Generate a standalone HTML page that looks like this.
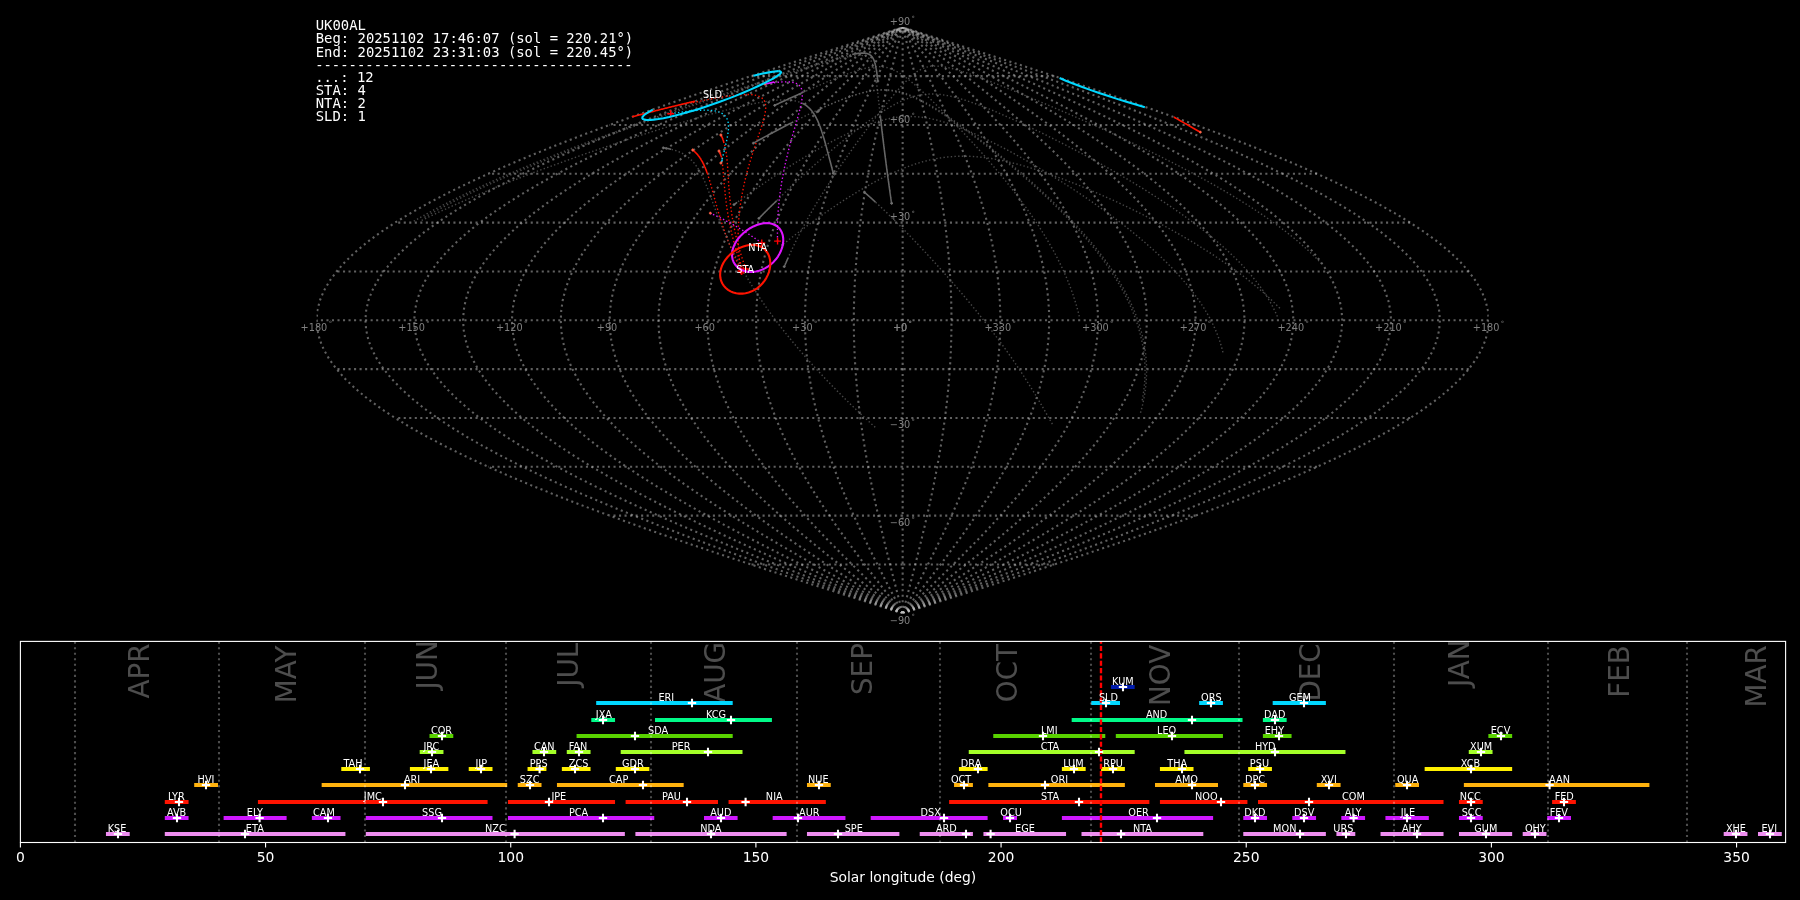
<!DOCTYPE html>
<html lang="en"><head><meta charset="utf-8"><title>UK00AL shower association</title>
<style>html,body{margin:0;padding:0;background:#000;overflow:hidden}svg{display:block;will-change:transform}text{font-family:"DejaVu Sans","Liberation Sans",sans-serif}.m{font-family:"DejaVu Sans Mono","Liberation Mono",monospace;font-size:13.889px;fill:#fff;white-space:pre}.g{fill:none;stroke:#c0c0c0;stroke-opacity:.5;stroke-width:2.083;stroke-dasharray:2.083 3.4375}.t{font-size:9.722px;fill:#808080;text-anchor:middle}.s{font-size:9.722px;fill:#fff;text-anchor:middle}.b{font-size:9.722px;fill:#fff;text-anchor:middle}.k{font-size:13.889px;fill:#fff;text-anchor:middle}.mo{font-size:27.778px;fill:#fff;fill-opacity:.3;text-anchor:end}.ml{fill:none;stroke:#fff;stroke-opacity:.3;stroke-width:2.083;stroke-dasharray:2.083 3.4375}.mt{fill:none;stroke-width:1.6}.md{fill:none;stroke-width:1.389;stroke-dasharray:1.389 2.292}.c{fill:none;stroke-width:2.083;stroke-linejoin:round}.bar{fill:none;stroke-width:4.167;stroke-linecap:square}.pk{fill:none;stroke:#fff;stroke-width:2.083}</style></head><body>
<svg width="1800" height="900" viewBox="0 0 1800 900">
<rect width="1800" height="900" fill="#000"/>
<defs><clipPath id="ca"><rect x="316.57" y="27.26" width="1172.16" height="586.08"/></clipPath>
<clipPath id="cb"><rect x="20.4" y="641.4" width="1765.2" height="201.1"/></clipPath></defs>
<g clip-path="url(#ca)">
<path class="g" d="M902.65 613.34 L902.65 603.57 L902.65 593.8 L902.65 584.04 L902.65 574.27 L902.65 564.5 L902.65 554.73 L902.65 544.96 L902.65 535.2 L902.65 525.43 L902.65 515.66 L902.65 505.89 L902.65 496.12 L902.65 486.36 L902.65 476.59 L902.65 466.82 L902.65 457.05 L902.65 447.28 L902.65 437.52 L902.65 427.75 L902.65 417.98 L902.65 408.21 L902.65 398.44 L902.65 388.68 L902.65 378.91 L902.65 369.14 L902.65 359.37 L902.65 349.6 L902.65 339.84 L902.65 330.07 L902.65 320.3 L902.65 310.53 L902.65 300.76 L902.65 291 L902.65 281.23 L902.65 271.46 L902.65 261.69 L902.65 251.92 L902.65 242.16 L902.65 232.39 L902.65 222.62 L902.65 212.85 L902.65 203.08 L902.65 193.32 L902.65 183.55 L902.65 173.78 L902.65 164.01 L902.65 154.24 L902.65 144.48 L902.65 134.71 L902.65 124.94 L902.65 115.17 L902.65 105.4 L902.65 95.64 L902.65 85.87 L902.65 76.1 L902.65 66.33 L902.65 56.56 L902.65 46.8 L902.65 37.03 L902.65 27.26"/>
<path class="g" d="M902.65 613.34 L900.09 603.57 L897.54 593.8 L895.01 584.04 L892.5 574.27 L890.01 564.5 L887.56 554.73 L885.15 544.96 L882.78 535.2 L880.48 525.43 L878.23 515.66 L876.05 505.89 L873.94 496.12 L871.91 486.36 L869.97 476.59 L868.11 466.82 L866.35 457.05 L864.69 447.28 L863.14 437.52 L861.69 427.75 L860.35 417.98 L859.13 408.21 L858.03 398.44 L857.05 388.68 L856.2 378.91 L855.47 369.14 L854.88 359.37 L854.41 349.6 L854.08 339.84 L853.88 330.07 L853.81 320.3 L853.88 310.53 L854.08 300.76 L854.41 291 L854.88 281.23 L855.47 271.46 L856.2 261.69 L857.05 251.92 L858.03 242.16 L859.13 232.39 L860.35 222.62 L861.69 212.85 L863.14 203.08 L864.69 193.32 L866.35 183.55 L868.11 173.78 L869.97 164.01 L871.91 154.24 L873.94 144.48 L876.05 134.71 L878.23 124.94 L880.48 115.17 L882.78 105.4 L885.15 95.64 L887.56 85.87 L890.01 76.1 L892.5 66.33 L895.01 56.56 L897.54 46.8 L900.09 37.03 L902.65 27.26"/>
<path class="g" d="M902.65 613.34 L897.54 603.57 L892.44 593.8 L887.37 584.04 L882.34 574.27 L877.37 564.5 L872.47 554.73 L867.64 544.96 L862.92 535.2 L858.3 525.43 L853.81 515.66 L849.45 505.89 L845.24 496.12 L841.18 486.36 L837.29 476.59 L833.58 466.82 L830.06 457.05 L826.74 447.28 L823.63 437.52 L820.73 427.75 L818.06 417.98 L815.62 408.21 L813.41 398.44 L811.46 388.68 L809.75 378.91 L808.3 369.14 L807.1 359.37 L806.17 349.6 L805.51 339.84 L805.1 330.07 L804.97 320.3 L805.1 310.53 L805.51 300.76 L806.17 291 L807.1 281.23 L808.3 271.46 L809.75 261.69 L811.46 251.92 L813.41 242.16 L815.62 232.39 L818.06 222.62 L820.73 212.85 L823.63 203.08 L826.74 193.32 L830.06 183.55 L833.58 173.78 L837.29 164.01 L841.18 154.24 L845.24 144.48 L849.45 134.71 L853.81 124.94 L858.3 115.17 L862.92 105.4 L867.64 95.64 L872.47 85.87 L877.37 76.1 L882.34 66.33 L887.37 56.56 L892.44 46.8 L897.54 37.03 L902.65 27.26"/>
<path class="g" d="M902.65 613.34 L894.98 603.57 L887.33 593.8 L879.73 584.04 L872.19 574.27 L864.73 564.5 L857.37 554.73 L850.14 544.96 L843.05 535.2 L836.13 525.43 L829.39 515.66 L822.85 505.89 L816.53 496.12 L810.44 486.36 L804.61 476.59 L799.04 466.82 L793.76 457.05 L788.78 447.28 L784.11 437.52 L779.77 427.75 L775.76 417.98 L772.1 408.21 L768.8 398.44 L765.86 388.68 L763.3 378.91 L761.12 369.14 L759.33 359.37 L757.93 349.6 L756.93 339.84 L756.33 330.07 L756.13 320.3 L756.33 310.53 L756.93 300.76 L757.93 291 L759.33 281.23 L761.12 271.46 L763.3 261.69 L765.86 251.92 L768.8 242.16 L772.1 232.39 L775.76 222.62 L779.77 212.85 L784.11 203.08 L788.78 193.32 L793.76 183.55 L799.04 173.78 L804.61 164.01 L810.44 154.24 L816.53 144.48 L822.85 134.71 L829.39 124.94 L836.13 115.17 L843.05 105.4 L850.14 95.64 L857.37 85.87 L864.73 76.1 L872.19 66.33 L879.73 56.56 L887.33 46.8 L894.98 37.03 L902.65 27.26"/>
<path class="g" d="M902.65 613.34 L892.43 603.57 L882.23 593.8 L872.09 584.04 L862.03 574.27 L852.09 564.5 L842.28 554.73 L832.64 544.96 L823.19 535.2 L813.96 525.43 L804.97 515.66 L796.25 505.89 L787.82 496.12 L779.71 486.36 L771.93 476.59 L764.51 466.82 L757.47 457.05 L750.83 447.28 L744.6 437.52 L738.81 427.75 L733.46 417.98 L728.58 408.21 L724.18 398.44 L720.27 388.68 L716.85 378.91 L713.95 369.14 L711.56 359.37 L709.7 349.6 L708.36 339.84 L707.56 330.07 L707.29 320.3 L707.56 310.53 L708.36 300.76 L709.7 291 L711.56 281.23 L713.95 271.46 L716.85 261.69 L720.27 251.92 L724.18 242.16 L728.58 232.39 L733.46 222.62 L738.81 212.85 L744.6 203.08 L750.83 193.32 L757.47 183.55 L764.51 173.78 L771.93 164.01 L779.71 154.24 L787.82 144.48 L796.25 134.71 L804.97 124.94 L813.96 115.17 L823.19 105.4 L832.64 95.64 L842.28 85.87 L852.09 76.1 L862.03 66.33 L872.09 56.56 L882.23 46.8 L892.43 37.03 L902.65 27.26"/>
<path class="g" d="M902.65 613.34 L889.87 603.57 L877.12 593.8 L864.45 584.04 L851.88 574.27 L839.45 564.5 L827.19 554.73 L815.14 544.96 L803.32 535.2 L791.79 525.43 L780.55 515.66 L769.65 505.89 L759.11 496.12 L748.97 486.36 L739.25 476.59 L729.97 466.82 L721.17 457.05 L712.87 447.28 L705.09 437.52 L697.85 427.75 L691.17 417.98 L685.07 408.21 L679.56 398.44 L674.67 388.68 L670.4 378.91 L666.77 369.14 L663.79 359.37 L661.46 349.6 L659.79 339.84 L658.78 330.07 L658.45 320.3 L658.78 310.53 L659.79 300.76 L661.46 291 L663.79 281.23 L666.77 271.46 L670.4 261.69 L674.67 251.92 L679.56 242.16 L685.07 232.39 L691.17 222.62 L697.85 212.85 L705.09 203.08 L712.87 193.32 L721.17 183.55 L729.97 173.78 L739.25 164.01 L748.97 154.24 L759.11 144.48 L769.65 134.71 L780.55 124.94 L791.79 115.17 L803.32 105.4 L815.14 95.64 L827.19 85.87 L839.45 76.1 L851.88 66.33 L864.45 56.56 L877.12 46.8 L889.87 37.03 L902.65 27.26"/>
<path class="g" d="M902.65 613.34 L887.31 603.57 L872.02 593.8 L856.81 584.04 L841.72 574.27 L826.81 564.5 L812.1 554.73 L797.63 544.96 L783.46 535.2 L769.61 525.43 L756.13 515.66 L743.05 505.89 L730.41 496.12 L718.23 486.36 L706.57 476.59 L695.44 466.82 L684.88 457.05 L674.92 447.28 L665.58 437.52 L656.89 427.75 L648.87 417.98 L641.55 408.21 L634.94 398.44 L629.07 388.68 L623.95 378.91 L619.6 369.14 L616.01 359.37 L613.22 349.6 L611.22 339.84 L610.01 330.07 L609.61 320.3 L610.01 310.53 L611.22 300.76 L613.22 291 L616.01 281.23 L619.6 271.46 L623.95 261.69 L629.07 251.92 L634.94 242.16 L641.55 232.39 L648.87 222.62 L656.89 212.85 L665.58 203.08 L674.92 193.32 L684.88 183.55 L695.44 173.78 L706.57 164.01 L718.23 154.24 L730.41 144.48 L743.05 134.71 L756.13 124.94 L769.61 115.17 L783.46 105.4 L797.63 95.64 L812.1 85.87 L826.81 76.1 L841.72 66.33 L856.81 56.56 L872.02 46.8 L887.31 37.03 L902.65 27.26"/>
<path class="g" d="M902.65 613.34 L884.76 603.57 L866.91 593.8 L849.17 584.04 L831.57 574.27 L814.16 564.5 L797 554.73 L780.13 544.96 L763.59 535.2 L747.44 525.43 L731.71 515.66 L716.45 505.89 L701.7 496.12 L687.5 486.36 L673.89 476.59 L660.9 466.82 L648.58 457.05 L636.96 447.28 L626.06 437.52 L615.93 427.75 L606.57 417.98 L598.03 408.21 L590.33 398.44 L583.48 388.68 L577.5 378.91 L572.42 369.14 L568.24 359.37 L564.98 349.6 L562.64 339.84 L561.24 330.07 L560.77 320.3 L561.24 310.53 L562.64 300.76 L564.98 291 L568.24 281.23 L572.42 271.46 L577.5 261.69 L583.48 251.92 L590.33 242.16 L598.03 232.39 L606.57 222.62 L615.93 212.85 L626.06 203.08 L636.96 193.32 L648.58 183.55 L660.9 173.78 L673.89 164.01 L687.5 154.24 L701.7 144.48 L716.45 134.71 L731.71 124.94 L747.44 115.17 L763.59 105.4 L780.13 95.64 L797 85.87 L814.16 76.1 L831.57 66.33 L849.17 56.56 L866.91 46.8 L884.76 37.03 L902.65 27.26"/>
<path class="g" d="M902.65 613.34 L882.2 603.57 L861.81 593.8 L841.53 584.04 L821.41 574.27 L801.52 564.5 L781.91 554.73 L762.63 544.96 L743.73 535.2 L725.27 525.43 L707.29 515.66 L689.85 505.89 L672.99 496.12 L656.76 486.36 L641.21 476.59 L626.37 466.82 L612.29 457.05 L599 447.28 L586.55 437.52 L574.96 427.75 L564.28 417.98 L554.52 408.21 L545.71 398.44 L537.88 388.68 L531.05 378.91 L525.24 369.14 L520.47 359.37 L516.74 349.6 L514.07 339.84 L512.47 330.07 L511.93 320.3 L512.47 310.53 L514.07 300.76 L516.74 291 L520.47 281.23 L525.24 271.46 L531.05 261.69 L537.88 251.92 L545.71 242.16 L554.52 232.39 L564.28 222.62 L574.96 212.85 L586.55 203.08 L599 193.32 L612.29 183.55 L626.37 173.78 L641.21 164.01 L656.76 154.24 L672.99 144.48 L689.85 134.71 L707.29 124.94 L725.27 115.17 L743.73 105.4 L762.63 95.64 L781.91 85.87 L801.52 76.1 L821.41 66.33 L841.53 56.56 L861.81 46.8 L882.2 37.03 L902.65 27.26"/>
<path class="g" d="M902.65 613.34 L879.65 603.57 L856.7 593.8 L833.89 584.04 L811.26 574.27 L788.88 564.5 L766.82 554.73 L745.13 544.96 L723.86 535.2 L703.09 525.43 L682.87 515.66 L663.25 505.89 L644.28 496.12 L626.03 486.36 L608.53 476.59 L591.83 466.82 L575.99 457.05 L561.05 447.28 L547.04 437.52 L534 427.75 L521.98 417.98 L511 408.21 L501.09 398.44 L492.29 388.68 L484.6 378.91 L478.07 369.14 L472.7 359.37 L468.5 349.6 L465.5 339.84 L463.69 330.07 L463.09 320.3 L463.69 310.53 L465.5 300.76 L468.5 291 L472.7 281.23 L478.07 271.46 L484.6 261.69 L492.29 251.92 L501.09 242.16 L511 232.39 L521.98 222.62 L534 212.85 L547.04 203.08 L561.05 193.32 L575.99 183.55 L591.83 173.78 L608.53 164.01 L626.03 154.24 L644.28 144.48 L663.25 134.71 L682.87 124.94 L703.09 115.17 L723.86 105.4 L745.13 95.64 L766.82 85.87 L788.88 76.1 L811.26 66.33 L833.89 56.56 L856.7 46.8 L879.65 37.03 L902.65 27.26"/>
<path class="g" d="M902.65 613.34 L877.09 603.57 L851.6 593.8 L826.25 584.04 L801.11 574.27 L776.24 564.5 L751.73 554.73 L727.62 544.96 L704 535.2 L680.92 525.43 L658.45 515.66 L636.65 505.89 L615.58 496.12 L595.29 486.36 L575.85 476.59 L557.3 466.82 L539.7 457.05 L523.09 447.28 L507.53 437.52 L493.04 427.75 L479.68 417.98 L467.48 408.21 L456.47 398.44 L446.69 388.68 L438.15 378.91 L430.89 369.14 L424.92 359.37 L420.26 349.6 L416.93 339.84 L414.92 330.07 L414.25 320.3 L414.92 310.53 L416.93 300.76 L420.26 291 L424.92 281.23 L430.89 271.46 L438.15 261.69 L446.69 251.92 L456.47 242.16 L467.48 232.39 L479.68 222.62 L493.04 212.85 L507.53 203.08 L523.09 193.32 L539.7 183.55 L557.3 173.78 L575.85 164.01 L595.29 154.24 L615.58 144.48 L636.65 134.71 L658.45 124.94 L680.92 115.17 L704 105.4 L727.62 95.64 L751.73 85.87 L776.24 76.1 L801.11 66.33 L826.25 56.56 L851.6 46.8 L877.09 37.03 L902.65 27.26"/>
<path class="g" d="M902.65 613.34 L874.53 603.57 L846.49 593.8 L818.61 584.04 L790.95 574.27 L763.6 564.5 L736.63 554.73 L710.12 544.96 L684.13 535.2 L658.75 525.43 L634.03 515.66 L610.05 505.89 L586.87 496.12 L564.55 486.36 L543.17 476.59 L522.76 466.82 L503.4 457.05 L485.14 447.28 L468.01 437.52 L452.08 427.75 L437.39 417.98 L423.97 408.21 L411.86 398.44 L401.09 388.68 L391.7 378.91 L383.72 369.14 L377.15 359.37 L372.02 349.6 L368.35 339.84 L366.15 330.07 L365.41 320.3 L366.15 310.53 L368.35 300.76 L372.02 291 L377.15 281.23 L383.72 271.46 L391.7 261.69 L401.09 251.92 L411.86 242.16 L423.97 232.39 L437.39 222.62 L452.08 212.85 L468.01 203.08 L485.14 193.32 L503.4 183.55 L522.76 173.78 L543.17 164.01 L564.55 154.24 L586.87 144.48 L610.05 134.71 L634.03 124.94 L658.75 115.17 L684.13 105.4 L710.12 95.64 L736.63 85.87 L763.6 76.1 L790.95 66.33 L818.61 56.56 L846.49 46.8 L874.53 37.03 L902.65 27.26"/>
<path class="g" d="M902.65 613.34 L871.98 603.57 L841.39 593.8 L810.97 584.04 L780.8 574.27 L750.96 564.5 L721.54 554.73 L692.62 544.96 L664.27 535.2 L636.58 525.43 L609.61 515.66 L583.45 505.89 L558.16 496.12 L533.82 486.36 L510.49 476.59 L488.23 466.82 L467.11 457.05 L447.18 447.28 L428.5 437.52 L411.12 427.75 L395.09 417.98 L380.45 408.21 L367.24 398.44 L355.5 388.68 L345.25 378.91 L336.54 369.14 L329.38 359.37 L323.79 349.6 L319.78 339.84 L317.37 330.07 L316.57 320.3 L317.37 310.53 L319.78 300.76 L323.79 291 L329.38 281.23 L336.54 271.46 L345.25 261.69 L355.5 251.92 L367.24 242.16 L380.45 232.39 L395.09 222.62 L411.12 212.85 L428.5 203.08 L447.18 193.32 L467.11 183.55 L488.23 173.78 L510.49 164.01 L533.82 154.24 L558.16 144.48 L583.45 134.71 L609.61 124.94 L636.58 115.17 L664.27 105.4 L692.62 95.64 L721.54 85.87 L750.96 76.1 L780.8 66.33 L810.97 56.56 L841.39 46.8 L871.98 37.03 L902.65 27.26"/>
<path class="g" d="M902.65 613.34 L933.32 603.57 L963.91 593.8 L994.33 584.04 L1024.5 574.27 L1054.34 564.5 L1083.76 554.73 L1112.68 544.96 L1141.03 535.2 L1168.72 525.43 L1195.69 515.66 L1221.85 505.89 L1247.14 496.12 L1271.48 486.36 L1294.81 476.59 L1317.07 466.82 L1338.19 457.05 L1358.12 447.28 L1376.8 437.52 L1394.18 427.75 L1410.21 417.98 L1424.85 408.21 L1438.06 398.44 L1449.8 388.68 L1460.04 378.91 L1468.76 369.14 L1475.92 359.37 L1481.51 349.6 L1485.52 339.84 L1487.93 330.07 L1488.73 320.3 L1487.93 310.53 L1485.52 300.76 L1481.51 291 L1475.92 281.23 L1468.76 271.46 L1460.04 261.69 L1449.8 251.92 L1438.06 242.16 L1424.85 232.39 L1410.21 222.62 L1394.18 212.85 L1376.8 203.08 L1358.12 193.32 L1338.19 183.55 L1317.07 173.78 L1294.81 164.01 L1271.48 154.24 L1247.14 144.48 L1221.85 134.71 L1195.69 124.94 L1168.72 115.17 L1141.03 105.4 L1112.68 95.64 L1083.76 85.87 L1054.34 76.1 L1024.5 66.33 L994.33 56.56 L963.91 46.8 L933.32 37.03 L902.65 27.26"/>
<path class="g" d="M902.65 613.34 L930.77 603.57 L958.81 593.8 L986.69 584.04 L1014.35 574.27 L1041.7 564.5 L1068.67 554.73 L1095.18 544.96 L1121.17 535.2 L1146.55 525.43 L1171.27 515.66 L1195.25 505.89 L1218.43 496.12 L1240.75 486.36 L1262.13 476.59 L1282.54 466.82 L1301.9 457.05 L1320.16 447.28 L1337.29 437.52 L1353.22 427.75 L1367.91 417.98 L1381.33 408.21 L1393.44 398.44 L1404.21 388.68 L1413.6 378.91 L1421.58 369.14 L1428.15 359.37 L1433.28 349.6 L1436.95 339.84 L1439.15 330.07 L1439.89 320.3 L1439.15 310.53 L1436.95 300.76 L1433.28 291 L1428.15 281.23 L1421.58 271.46 L1413.6 261.69 L1404.21 251.92 L1393.44 242.16 L1381.33 232.39 L1367.91 222.62 L1353.22 212.85 L1337.29 203.08 L1320.16 193.32 L1301.9 183.55 L1282.54 173.78 L1262.13 164.01 L1240.75 154.24 L1218.43 144.48 L1195.25 134.71 L1171.27 124.94 L1146.55 115.17 L1121.17 105.4 L1095.18 95.64 L1068.67 85.87 L1041.7 76.1 L1014.35 66.33 L986.69 56.56 L958.81 46.8 L930.77 37.03 L902.65 27.26"/>
<path class="g" d="M902.65 613.34 L928.21 603.57 L953.7 593.8 L979.05 584.04 L1004.19 574.27 L1029.06 564.5 L1053.57 554.73 L1077.68 544.96 L1101.3 535.2 L1124.38 525.43 L1146.85 515.66 L1168.65 505.89 L1189.72 496.12 L1210.01 486.36 L1229.45 476.59 L1248 466.82 L1265.6 457.05 L1282.21 447.28 L1297.77 437.52 L1312.26 427.75 L1325.62 417.98 L1337.82 408.21 L1348.83 398.44 L1358.61 388.68 L1367.15 378.91 L1374.41 369.14 L1380.38 359.37 L1385.04 349.6 L1388.37 339.84 L1390.38 330.07 L1391.05 320.3 L1390.38 310.53 L1388.37 300.76 L1385.04 291 L1380.38 281.23 L1374.41 271.46 L1367.15 261.69 L1358.61 251.92 L1348.83 242.16 L1337.82 232.39 L1325.62 222.62 L1312.26 212.85 L1297.77 203.08 L1282.21 193.32 L1265.6 183.55 L1248 173.78 L1229.45 164.01 L1210.01 154.24 L1189.72 144.48 L1168.65 134.71 L1146.85 124.94 L1124.38 115.17 L1101.3 105.4 L1077.68 95.64 L1053.57 85.87 L1029.06 76.1 L1004.19 66.33 L979.05 56.56 L953.7 46.8 L928.21 37.03 L902.65 27.26"/>
<path class="g" d="M902.65 613.34 L925.65 603.57 L948.6 593.8 L971.41 584.04 L994.04 574.27 L1016.42 564.5 L1038.48 554.73 L1060.17 544.96 L1081.44 535.2 L1102.21 525.43 L1122.43 515.66 L1142.05 505.89 L1161.02 496.12 L1179.27 486.36 L1196.77 476.59 L1213.47 466.82 L1229.31 457.05 L1244.25 447.28 L1258.26 437.52 L1271.3 427.75 L1283.32 417.98 L1294.3 408.21 L1304.21 398.44 L1313.01 388.68 L1320.7 378.91 L1327.23 369.14 L1332.6 359.37 L1336.8 349.6 L1339.8 339.84 L1341.61 330.07 L1342.21 320.3 L1341.61 310.53 L1339.8 300.76 L1336.8 291 L1332.6 281.23 L1327.23 271.46 L1320.7 261.69 L1313.01 251.92 L1304.21 242.16 L1294.3 232.39 L1283.32 222.62 L1271.3 212.85 L1258.26 203.08 L1244.25 193.32 L1229.31 183.55 L1213.47 173.78 L1196.77 164.01 L1179.27 154.24 L1161.02 144.48 L1142.05 134.71 L1122.43 124.94 L1102.21 115.17 L1081.44 105.4 L1060.17 95.64 L1038.48 85.87 L1016.42 76.1 L994.04 66.33 L971.41 56.56 L948.6 46.8 L925.65 37.03 L902.65 27.26"/>
<path class="g" d="M902.65 613.34 L923.1 603.57 L943.49 593.8 L963.77 584.04 L983.89 574.27 L1003.78 564.5 L1023.39 554.73 L1042.67 544.96 L1061.57 535.2 L1080.03 525.43 L1098.01 515.66 L1115.45 505.89 L1132.31 496.12 L1148.54 486.36 L1164.09 476.59 L1178.93 466.82 L1193.01 457.05 L1206.3 447.28 L1218.75 437.52 L1230.34 427.75 L1241.02 417.98 L1250.78 408.21 L1259.59 398.44 L1267.42 388.68 L1274.25 378.91 L1280.06 369.14 L1284.83 359.37 L1288.56 349.6 L1291.23 339.84 L1292.83 330.07 L1293.37 320.3 L1292.83 310.53 L1291.23 300.76 L1288.56 291 L1284.83 281.23 L1280.06 271.46 L1274.25 261.69 L1267.42 251.92 L1259.59 242.16 L1250.78 232.39 L1241.02 222.62 L1230.34 212.85 L1218.75 203.08 L1206.3 193.32 L1193.01 183.55 L1178.93 173.78 L1164.09 164.01 L1148.54 154.24 L1132.31 144.48 L1115.45 134.71 L1098.01 124.94 L1080.03 115.17 L1061.57 105.4 L1042.67 95.64 L1023.39 85.87 L1003.78 76.1 L983.89 66.33 L963.77 56.56 L943.49 46.8 L923.1 37.03 L902.65 27.26"/>
<path class="g" d="M902.65 613.34 L920.54 603.57 L938.39 593.8 L956.13 584.04 L973.73 574.27 L991.14 564.5 L1008.3 554.73 L1025.17 544.96 L1041.71 535.2 L1057.86 525.43 L1073.59 515.66 L1088.85 505.89 L1103.6 496.12 L1117.8 486.36 L1131.41 476.59 L1144.4 466.82 L1156.72 457.05 L1168.34 447.28 L1179.24 437.52 L1189.37 427.75 L1198.73 417.98 L1207.27 408.21 L1214.97 398.44 L1221.82 388.68 L1227.8 378.91 L1232.88 369.14 L1237.06 359.37 L1240.32 349.6 L1242.66 339.84 L1244.06 330.07 L1244.53 320.3 L1244.06 310.53 L1242.66 300.76 L1240.32 291 L1237.06 281.23 L1232.88 271.46 L1227.8 261.69 L1221.82 251.92 L1214.97 242.16 L1207.27 232.39 L1198.73 222.62 L1189.37 212.85 L1179.24 203.08 L1168.34 193.32 L1156.72 183.55 L1144.4 173.78 L1131.41 164.01 L1117.8 154.24 L1103.6 144.48 L1088.85 134.71 L1073.59 124.94 L1057.86 115.17 L1041.71 105.4 L1025.17 95.64 L1008.3 85.87 L991.14 76.1 L973.73 66.33 L956.13 56.56 L938.39 46.8 L920.54 37.03 L902.65 27.26"/>
<path class="g" d="M902.65 613.34 L917.99 603.57 L933.28 593.8 L948.49 584.04 L963.58 574.27 L978.49 564.5 L993.2 554.73 L1007.67 544.96 L1021.84 535.2 L1035.69 525.43 L1049.17 515.66 L1062.25 505.89 L1074.89 496.12 L1087.07 486.36 L1098.73 476.59 L1109.86 466.82 L1120.42 457.05 L1130.38 447.28 L1139.72 437.52 L1148.41 427.75 L1156.43 417.98 L1163.75 408.21 L1170.36 398.44 L1176.23 388.68 L1181.35 378.91 L1185.7 369.14 L1189.29 359.37 L1192.08 349.6 L1194.08 339.84 L1195.29 330.07 L1195.69 320.3 L1195.29 310.53 L1194.08 300.76 L1192.08 291 L1189.29 281.23 L1185.7 271.46 L1181.35 261.69 L1176.23 251.92 L1170.36 242.16 L1163.75 232.39 L1156.43 222.62 L1148.41 212.85 L1139.72 203.08 L1130.38 193.32 L1120.42 183.55 L1109.86 173.78 L1098.73 164.01 L1087.07 154.24 L1074.89 144.48 L1062.25 134.71 L1049.17 124.94 L1035.69 115.17 L1021.84 105.4 L1007.67 95.64 L993.2 85.87 L978.49 76.1 L963.58 66.33 L948.49 56.56 L933.28 46.8 L917.99 37.03 L902.65 27.26"/>
<path class="g" d="M902.65 613.34 L915.43 603.57 L928.18 593.8 L940.85 584.04 L953.42 574.27 L965.85 564.5 L978.11 554.73 L990.16 544.96 L1001.98 535.2 L1013.51 525.43 L1024.75 515.66 L1035.65 505.89 L1046.19 496.12 L1056.33 486.36 L1066.05 476.59 L1075.33 466.82 L1084.13 457.05 L1092.43 447.28 L1100.21 437.52 L1107.45 427.75 L1114.13 417.98 L1120.23 408.21 L1125.74 398.44 L1130.63 388.68 L1134.9 378.91 L1138.53 369.14 L1141.51 359.37 L1143.84 349.6 L1145.51 339.84 L1146.52 330.07 L1146.85 320.3 L1146.52 310.53 L1145.51 300.76 L1143.84 291 L1141.51 281.23 L1138.53 271.46 L1134.9 261.69 L1130.63 251.92 L1125.74 242.16 L1120.23 232.39 L1114.13 222.62 L1107.45 212.85 L1100.21 203.08 L1092.43 193.32 L1084.13 183.55 L1075.33 173.78 L1066.05 164.01 L1056.33 154.24 L1046.19 144.48 L1035.65 134.71 L1024.75 124.94 L1013.51 115.17 L1001.98 105.4 L990.16 95.64 L978.11 85.87 L965.85 76.1 L953.42 66.33 L940.85 56.56 L928.18 46.8 L915.43 37.03 L902.65 27.26"/>
<path class="g" d="M902.65 613.34 L912.87 603.57 L923.07 593.8 L933.21 584.04 L943.27 574.27 L953.21 564.5 L963.02 554.73 L972.66 544.96 L982.11 535.2 L991.34 525.43 L1000.33 515.66 L1009.05 505.89 L1017.48 496.12 L1025.59 486.36 L1033.37 476.59 L1040.79 466.82 L1047.83 457.05 L1054.47 447.28 L1060.7 437.52 L1066.49 427.75 L1071.84 417.98 L1076.72 408.21 L1081.12 398.44 L1085.03 388.68 L1088.45 378.91 L1091.35 369.14 L1093.74 359.37 L1095.6 349.6 L1096.94 339.84 L1097.74 330.07 L1098.01 320.3 L1097.74 310.53 L1096.94 300.76 L1095.6 291 L1093.74 281.23 L1091.35 271.46 L1088.45 261.69 L1085.03 251.92 L1081.12 242.16 L1076.72 232.39 L1071.84 222.62 L1066.49 212.85 L1060.7 203.08 L1054.47 193.32 L1047.83 183.55 L1040.79 173.78 L1033.37 164.01 L1025.59 154.24 L1017.48 144.48 L1009.05 134.71 L1000.33 124.94 L991.34 115.17 L982.11 105.4 L972.66 95.64 L963.02 85.87 L953.21 76.1 L943.27 66.33 L933.21 56.56 L923.07 46.8 L912.87 37.03 L902.65 27.26"/>
<path class="g" d="M902.65 613.34 L910.32 603.57 L917.97 593.8 L925.57 584.04 L933.11 574.27 L940.57 564.5 L947.93 554.73 L955.16 544.96 L962.25 535.2 L969.17 525.43 L975.91 515.66 L982.45 505.89 L988.77 496.12 L994.86 486.36 L1000.69 476.59 L1006.26 466.82 L1011.54 457.05 L1016.52 447.28 L1021.19 437.52 L1025.53 427.75 L1029.54 417.98 L1033.2 408.21 L1036.5 398.44 L1039.44 388.68 L1042 378.91 L1044.18 369.14 L1045.97 359.37 L1047.37 349.6 L1048.37 339.84 L1048.97 330.07 L1049.17 320.3 L1048.97 310.53 L1048.37 300.76 L1047.37 291 L1045.97 281.23 L1044.18 271.46 L1042 261.69 L1039.44 251.92 L1036.5 242.16 L1033.2 232.39 L1029.54 222.62 L1025.53 212.85 L1021.19 203.08 L1016.52 193.32 L1011.54 183.55 L1006.26 173.78 L1000.69 164.01 L994.86 154.24 L988.77 144.48 L982.45 134.71 L975.91 124.94 L969.17 115.17 L962.25 105.4 L955.16 95.64 L947.93 85.87 L940.57 76.1 L933.11 66.33 L925.57 56.56 L917.97 46.8 L910.32 37.03 L902.65 27.26"/>
<path class="g" d="M902.65 613.34 L907.76 603.57 L912.86 593.8 L917.93 584.04 L922.96 574.27 L927.93 564.5 L932.83 554.73 L937.66 544.96 L942.38 535.2 L947 525.43 L951.49 515.66 L955.85 505.89 L960.06 496.12 L964.12 486.36 L968.01 476.59 L971.72 466.82 L975.24 457.05 L978.56 447.28 L981.67 437.52 L984.57 427.75 L987.24 417.98 L989.68 408.21 L991.89 398.44 L993.84 388.68 L995.55 378.91 L997 369.14 L998.2 359.37 L999.13 349.6 L999.79 339.84 L1000.2 330.07 L1000.33 320.3 L1000.2 310.53 L999.79 300.76 L999.13 291 L998.2 281.23 L997 271.46 L995.55 261.69 L993.84 251.92 L991.89 242.16 L989.68 232.39 L987.24 222.62 L984.57 212.85 L981.67 203.08 L978.56 193.32 L975.24 183.55 L971.72 173.78 L968.01 164.01 L964.12 154.24 L960.06 144.48 L955.85 134.71 L951.49 124.94 L947 115.17 L942.38 105.4 L937.66 95.64 L932.83 85.87 L927.93 76.1 L922.96 66.33 L917.93 56.56 L912.86 46.8 L907.76 37.03 L902.65 27.26"/>
<path class="g" d="M902.65 613.34 L905.21 603.57 L907.76 593.8 L910.29 584.04 L912.8 574.27 L915.29 564.5 L917.74 554.73 L920.15 544.96 L922.52 535.2 L924.82 525.43 L927.07 515.66 L929.25 505.89 L931.36 496.12 L933.39 486.36 L935.33 476.59 L937.19 466.82 L938.95 457.05 L940.61 447.28 L942.16 437.52 L943.61 427.75 L944.95 417.98 L946.17 408.21 L947.27 398.44 L948.25 388.68 L949.1 378.91 L949.83 369.14 L950.42 359.37 L950.89 349.6 L951.22 339.84 L951.42 330.07 L951.49 320.3 L951.42 310.53 L951.22 300.76 L950.89 291 L950.42 281.23 L949.83 271.46 L949.1 261.69 L948.25 251.92 L947.27 242.16 L946.17 232.39 L944.95 222.62 L943.61 212.85 L942.16 203.08 L940.61 193.32 L938.95 183.55 L937.19 173.78 L935.33 164.01 L933.39 154.24 L931.36 144.48 L929.25 134.71 L927.07 124.94 L924.82 115.17 L922.52 105.4 L920.15 95.64 L917.74 85.87 L915.29 76.1 L912.8 66.33 L910.29 56.56 L907.76 46.8 L905.21 37.03 L902.65 27.26"/>
<path class="g" d="M902.65 613.34 L902.65 613.34 L902.65 613.34 L902.65 613.34 L902.65 613.34 L902.65 613.34 L902.65 613.34 L902.65 613.34 L902.65 613.34 L902.65 613.34 L902.65 613.34 L902.65 613.34 L902.65 613.34"/>
<path class="g" d="M902.65 613.34 L902.65 613.34 L902.65 613.34 L902.65 613.34 L902.65 613.34 L902.65 613.34 L902.65 613.34 L902.65 613.34 L902.65 613.34 L902.65 613.34 L902.65 613.34 L902.65 613.34 L902.65 613.34"/>
<path class="g" d="M902.65 564.5 L890.01 564.5 L877.37 564.5 L864.73 564.5 L852.09 564.5 L839.45 564.5 L826.81 564.5 L814.16 564.5 L801.52 564.5 L788.88 564.5 L776.24 564.5 L763.6 564.5 L750.96 564.5"/>
<path class="g" d="M1054.34 564.5 L1041.7 564.5 L1029.06 564.5 L1016.42 564.5 L1003.78 564.5 L991.14 564.5 L978.49 564.5 L965.85 564.5 L953.21 564.5 L940.57 564.5 L927.93 564.5 L915.29 564.5 L902.65 564.5"/>
<path class="g" d="M902.65 515.66 L878.23 515.66 L853.81 515.66 L829.39 515.66 L804.97 515.66 L780.55 515.66 L756.13 515.66 L731.71 515.66 L707.29 515.66 L682.87 515.66 L658.45 515.66 L634.03 515.66 L609.61 515.66"/>
<path class="g" d="M1195.69 515.66 L1171.27 515.66 L1146.85 515.66 L1122.43 515.66 L1098.01 515.66 L1073.59 515.66 L1049.17 515.66 L1024.75 515.66 L1000.33 515.66 L975.91 515.66 L951.49 515.66 L927.07 515.66 L902.65 515.66"/>
<path class="g" d="M902.65 466.82 L868.11 466.82 L833.58 466.82 L799.04 466.82 L764.51 466.82 L729.97 466.82 L695.44 466.82 L660.9 466.82 L626.37 466.82 L591.83 466.82 L557.3 466.82 L522.76 466.82 L488.23 466.82"/>
<path class="g" d="M1317.07 466.82 L1282.54 466.82 L1248 466.82 L1213.47 466.82 L1178.93 466.82 L1144.4 466.82 L1109.86 466.82 L1075.33 466.82 L1040.79 466.82 L1006.26 466.82 L971.72 466.82 L937.19 466.82 L902.65 466.82"/>
<path class="g" d="M902.65 417.98 L860.35 417.98 L818.06 417.98 L775.76 417.98 L733.46 417.98 L691.17 417.98 L648.87 417.98 L606.57 417.98 L564.28 417.98 L521.98 417.98 L479.68 417.98 L437.39 417.98 L395.09 417.98"/>
<path class="g" d="M1410.21 417.98 L1367.91 417.98 L1325.62 417.98 L1283.32 417.98 L1241.02 417.98 L1198.73 417.98 L1156.43 417.98 L1114.13 417.98 L1071.84 417.98 L1029.54 417.98 L987.24 417.98 L944.95 417.98 L902.65 417.98"/>
<path class="g" d="M902.65 369.14 L855.47 369.14 L808.3 369.14 L761.12 369.14 L713.95 369.14 L666.77 369.14 L619.6 369.14 L572.42 369.14 L525.24 369.14 L478.07 369.14 L430.89 369.14 L383.72 369.14 L336.54 369.14"/>
<path class="g" d="M1468.76 369.14 L1421.58 369.14 L1374.41 369.14 L1327.23 369.14 L1280.06 369.14 L1232.88 369.14 L1185.7 369.14 L1138.53 369.14 L1091.35 369.14 L1044.18 369.14 L997 369.14 L949.83 369.14 L902.65 369.14"/>
<path class="g" d="M902.65 320.3 L853.81 320.3 L804.97 320.3 L756.13 320.3 L707.29 320.3 L658.45 320.3 L609.61 320.3 L560.77 320.3 L511.93 320.3 L463.09 320.3 L414.25 320.3 L365.41 320.3 L316.57 320.3"/>
<path class="g" d="M1488.73 320.3 L1439.89 320.3 L1391.05 320.3 L1342.21 320.3 L1293.37 320.3 L1244.53 320.3 L1195.69 320.3 L1146.85 320.3 L1098.01 320.3 L1049.17 320.3 L1000.33 320.3 L951.49 320.3 L902.65 320.3"/>
<path class="g" d="M902.65 271.46 L855.47 271.46 L808.3 271.46 L761.12 271.46 L713.95 271.46 L666.77 271.46 L619.6 271.46 L572.42 271.46 L525.24 271.46 L478.07 271.46 L430.89 271.46 L383.72 271.46 L336.54 271.46"/>
<path class="g" d="M1468.76 271.46 L1421.58 271.46 L1374.41 271.46 L1327.23 271.46 L1280.06 271.46 L1232.88 271.46 L1185.7 271.46 L1138.53 271.46 L1091.35 271.46 L1044.18 271.46 L997 271.46 L949.83 271.46 L902.65 271.46"/>
<path class="g" d="M902.65 222.62 L860.35 222.62 L818.06 222.62 L775.76 222.62 L733.46 222.62 L691.17 222.62 L648.87 222.62 L606.57 222.62 L564.28 222.62 L521.98 222.62 L479.68 222.62 L437.39 222.62 L395.09 222.62"/>
<path class="g" d="M1410.21 222.62 L1367.91 222.62 L1325.62 222.62 L1283.32 222.62 L1241.02 222.62 L1198.73 222.62 L1156.43 222.62 L1114.13 222.62 L1071.84 222.62 L1029.54 222.62 L987.24 222.62 L944.95 222.62 L902.65 222.62"/>
<path class="g" d="M902.65 173.78 L868.11 173.78 L833.58 173.78 L799.04 173.78 L764.51 173.78 L729.97 173.78 L695.44 173.78 L660.9 173.78 L626.37 173.78 L591.83 173.78 L557.3 173.78 L522.76 173.78 L488.23 173.78"/>
<path class="g" d="M1317.07 173.78 L1282.54 173.78 L1248 173.78 L1213.47 173.78 L1178.93 173.78 L1144.4 173.78 L1109.86 173.78 L1075.33 173.78 L1040.79 173.78 L1006.26 173.78 L971.72 173.78 L937.19 173.78 L902.65 173.78"/>
<path class="g" d="M902.65 124.94 L878.23 124.94 L853.81 124.94 L829.39 124.94 L804.97 124.94 L780.55 124.94 L756.13 124.94 L731.71 124.94 L707.29 124.94 L682.87 124.94 L658.45 124.94 L634.03 124.94 L609.61 124.94"/>
<path class="g" d="M1195.69 124.94 L1171.27 124.94 L1146.85 124.94 L1122.43 124.94 L1098.01 124.94 L1073.59 124.94 L1049.17 124.94 L1024.75 124.94 L1000.33 124.94 L975.91 124.94 L951.49 124.94 L927.07 124.94 L902.65 124.94"/>
<path class="g" d="M902.65 76.1 L890.01 76.1 L877.37 76.1 L864.73 76.1 L852.09 76.1 L839.45 76.1 L826.81 76.1 L814.16 76.1 L801.52 76.1 L788.88 76.1 L776.24 76.1 L763.6 76.1 L750.96 76.1"/>
<path class="g" d="M1054.34 76.1 L1041.7 76.1 L1029.06 76.1 L1016.42 76.1 L1003.78 76.1 L991.14 76.1 L978.49 76.1 L965.85 76.1 L953.21 76.1 L940.57 76.1 L927.93 76.1 L915.29 76.1 L902.65 76.1"/>
<path class="g" d="M902.65 27.26 L902.65 27.26 L902.65 27.26 L902.65 27.26 L902.65 27.26 L902.65 27.26 L902.65 27.26 L902.65 27.26 L902.65 27.26 L902.65 27.26 L902.65 27.26 L902.65 27.26 L902.65 27.26"/>
<path class="g" d="M902.65 27.26 L902.65 27.26 L902.65 27.26 L902.65 27.26 L902.65 27.26 L902.65 27.26 L902.65 27.26 L902.65 27.26 L902.65 27.26 L902.65 27.26 L902.65 27.26 L902.65 27.26 L902.65 27.26"/>
<path class="mt" stroke="rgb(255,19,0)" d="M695 101.2 L694.28 101.37 L693.56 101.53 L692.84 101.7 L692.11 101.87 L691.38 102.04 L690.65 102.21 L689.92 102.38 L689.18 102.55 L688.45 102.72 L687.71 102.9 L686.96 103.07 L686.22 103.25 L685.47 103.43 L684.72 103.6 L683.97 103.78 L683.22 103.96 L682.46 104.14 L681.71 104.32 L680.95 104.51 L680.18 104.69 L679.42 104.87 L678.65 105.06 L677.88 105.24 L677.11 105.43 L676.34 105.62 L675.57 105.81 L674.79 106 L674.01 106.18 L673.23 106.38 L672.45 106.57 L671.66 106.76 L670.88 106.95 L670.09 107.15 L669.3 107.34 L668.51 107.54 L667.71 107.73 L666.92 107.93 L666.12 108.13 L665.32 108.33 L664.52 108.53 L663.71 108.73 L662.91 108.93 L662.1 109.13 L661.29 109.33 L660.48 109.53 L659.67 109.74 L658.86 109.94 L658.04 110.15 L657.23 110.35 L656.41 110.56 L655.59 110.77 L654.77 110.97 L653.94 111.18 L653.12 111.39 L652.29 111.6 L651.46 111.81 L650.64 112.02 L649.8 112.23 L648.97 112.45 L648.14 112.66 L647.3 112.87 L646.47 113.09 L645.63 113.3 L644.79 113.52 L643.95 113.74 L643.11 113.95 L642.26 114.17 L641.42 114.39 L640.57 114.61 L639.72 114.83 L638.88 115.05 L638.03 115.27 L637.17 115.49 L636.32 115.71 L635.47 115.93 L634.61 116.16 L633.76 116.38 L632.9 116.6 L632.04 116.83"/>
<path class="mt" stroke="rgb(255,19,0)" d="M1173.83 117.05 L1174.23 117.28 L1174.63 117.5 L1175.02 117.73 L1175.42 117.96 L1175.82 118.19 L1176.23 118.42 L1176.63 118.64 L1177.03 118.87 L1177.44 119.1 L1177.84 119.33 L1178.25 119.57 L1178.66 119.8 L1179.06 120.03 L1179.47 120.26 L1179.88 120.49 L1180.29 120.73 L1180.71 120.96 L1181.12 121.2 L1181.53 121.43 L1181.95 121.67 L1182.36 121.9 L1182.78 122.14 L1183.2 122.38 L1183.61 122.61 L1184.03 122.85 L1184.45 123.09 L1184.87 123.33 L1185.29 123.57 L1185.72 123.81 L1186.14 124.05 L1186.56 124.29 L1186.99 124.53 L1187.41 124.77 L1187.83 125.01 L1188.26 125.26 L1188.69 125.5 L1189.11 125.74 L1189.54 125.98 L1189.97 126.23 L1190.4 126.47 L1190.83 126.72 L1191.26 126.96 L1191.69 127.21 L1192.12 127.45 L1192.55 127.7 L1192.98 127.95 L1193.42 128.19 L1193.85 128.44 L1194.28 128.69 L1194.72 128.94 L1195.15 129.19 L1195.59 129.44 L1196.02 129.69 L1196.46 129.94 L1196.9 130.19 L1197.33 130.44 L1197.77 130.69 L1198.21 130.94 L1198.64 131.19 L1199.08 131.44 L1199.52 131.69 L1199.96 131.95 L1200.4 132.2"/>
<path class="md" stroke="rgb(255,19,0)" d="M740.88 270.84 L740.48 268.24 L740.12 265.65 L739.79 263.06 L739.49 260.47 L739.22 257.89 L738.98 255.3 L738.78 252.72 L738.6 250.14 L738.45 247.57 L738.34 244.99 L738.25 242.42 L738.2 239.85 L738.17 237.28 L738.18 234.72 L738.21 232.16 L738.27 229.6 L738.37 227.05 L738.49 224.5 L738.64 221.95 L738.82 219.41 L739.02 216.87 L739.26 214.34 L739.52 211.81 L739.81 209.29 L740.12 206.77 L740.47 204.26 L740.84 201.75 L741.23 199.25 L741.65 196.75 L742.09 194.26 L742.56 191.78 L743.05 189.31 L743.56 186.84 L744.09 184.38 L744.65 181.93 L745.22 179.49 L745.82 177.05 L746.43 174.63 L747.06 172.22 L747.71 169.81 L748.38 167.42 L749.06 165.04 L749.75 162.67 L750.45 160.32 L751.17 157.98 L751.9 155.66 L752.63 153.35 L753.37 151.05 L754.11 148.78 L754.86 146.52 L755.61 144.28 L756.35 142.07 L757.09 139.87 L757.83 137.7 L758.55 135.55 L759.27 133.43 L759.97 131.34 L760.65 129.28 L761.31 127.25 L761.94 125.25 L762.54 123.29 L763.1 121.36 L763.63 119.48 L764.11 117.64 L764.54 115.84 L764.91 114.09 L765.22 112.4 L765.46 110.75 L765.62 109.17 L765.7 107.65 L765.68 106.19 L765.56 104.8 L765.32 103.48 L764.97 102.23 L764.47 101.07 L763.84 99.99 L763.05 99 L762.1 98.09 L760.98 97.29 L759.66 96.58 L758.15 95.97 L756.44 95.46 L754.5 95.06 L752.35 94.77 L749.96 94.59 L747.33 94.52 L744.46 94.55 L741.34 94.7 L737.98 94.96 L734.36 95.33 L730.49 95.8 L726.37 96.37 L722.01 97.05 L717.4 97.83 L712.56 98.7 L707.49 99.66 L702.2 100.72 L696.7 101.85 L691 103.07"/>
<path class="mt" stroke="rgb(255,19,0)" d="M707.3 173.3 L707.23 173.11 L707.17 172.92 L707.1 172.74 L707.03 172.55 L706.97 172.36 L706.9 172.18 L706.83 171.99 L706.76 171.81 L706.7 171.62 L706.63 171.44 L706.56 171.25 L706.49 171.07 L706.42 170.88 L706.35 170.7 L706.28 170.52 L706.21 170.33 L706.14 170.15 L706.07 169.97 L706 169.79 L705.93 169.61 L705.86 169.43 L705.79 169.25 L705.72 169.07 L705.65 168.89 L705.58 168.71 L705.5 168.53 L705.43 168.36 L705.36 168.18 L705.28 168 L705.21 167.82 L705.14 167.65 L705.06 167.47 L704.99 167.3 L704.91 167.12 L704.84 166.95 L704.76 166.77 L704.69 166.6 L704.61 166.43 L704.54 166.25 L704.46 166.08 L704.38 165.91 L704.3 165.74 L704.23 165.57 L704.15 165.4 L704.07 165.23 L703.99 165.06 L703.91 164.89 L703.83 164.72 L703.75 164.55 L703.67 164.38 L703.59 164.22 L703.51 164.05 L703.43 163.88 L703.35 163.72 L703.27 163.55 L703.18 163.39 L703.1 163.22 L703.02 163.06 L702.93 162.9 L702.85 162.73 L702.76 162.57 L702.68 162.41 L702.59 162.25 L702.51 162.08 L702.42 161.92 L702.33 161.76 L702.25 161.6 L702.16 161.44 L702.07 161.29 L701.98 161.13 L701.89 160.97 L701.8 160.81 L701.71 160.66 L701.62 160.5 L701.53 160.34 L701.44 160.19 L701.35 160.03 L701.25 159.88 L701.16 159.73 L701.07 159.57 L700.97 159.42 L700.88 159.27 L700.78 159.12 L700.69 158.96 L700.59 158.81 L700.5 158.66 L700.4 158.51 L700.3 158.36 L700.2 158.22 L700.1 158.07 L700.01 157.92 L699.91 157.77 L699.8 157.63 L699.7 157.48 L699.6 157.34 L699.5 157.19 L699.4 157.05 L699.29 156.9 L699.19 156.76 L699.08 156.62 L698.98 156.48 L698.87 156.33 L698.77 156.19 L698.66 156.05 L698.55 155.91 L698.44 155.77 L698.34 155.63 L698.23 155.5 L698.12 155.36 L698 155.22 L697.89 155.08 L697.78 154.95 L697.67 154.81 L697.56 154.68 L697.44 154.54 L697.33 154.41 L697.21 154.28 L697.09 154.15 L696.98 154.01 L696.86 153.88 L696.74 153.75 L696.62 153.62 L696.5 153.49 L696.38 153.36 L696.26 153.23 L696.14 153.11 L696.02 152.98 L695.89 152.85 L695.77 152.73 L695.64 152.6 L695.52 152.48 L695.39 152.35 L695.27 152.23 L695.14 152.11 L695.01 151.98 L694.88 151.86 L694.75 151.74 L694.62 151.62 L694.49 151.5 L694.35 151.38 L694.22 151.26 L694.09 151.14 L693.95 151.03 L693.82 150.91 L693.68 150.79 L693.54 150.68 L693.4 150.56 L693.26 150.45 L693.13 150.34 L692.98 150.22 L692.84 150.11 L692.7 150"/>
<path class="md" stroke="rgb(255,19,0)" d="M741.7 271.5 L741.15 270.4 L740.6 269.3 L740.06 268.21 L739.52 267.11 L738.99 266.02 L738.46 264.92 L737.94 263.83 L737.42 262.74 L736.91 261.65 L736.4 260.56 L735.9 259.47 L735.41 258.39 L734.92 257.3 L734.43 256.22 L733.95 255.14 L733.48 254.06 L733.01 252.98 L732.55 251.9 L732.09 250.82 L731.64 249.75 L731.19 248.67 L730.74 247.6 L730.31 246.53 L729.87 245.46 L729.45 244.39 L729.02 243.33 L728.6 242.26 L728.19 241.2 L727.78 240.14 L727.38 239.08 L726.98 238.03 L726.59 236.97 L726.2 235.92 L725.81 234.87 L725.43 233.82 L725.06 232.77 L724.69 231.73 L724.32 230.68 L723.96 229.64 L723.6 228.61 L723.25 227.57 L722.9 226.54 L722.56 225.5 L722.22 224.48 L721.88 223.45 L721.55 222.43 L721.22 221.4 L720.9 220.38 L720.58 219.37 L720.26 218.35 L719.95 217.34 L719.64 216.34 L719.34 215.33 L719.04 214.33 L718.74 213.33 L718.44 212.33 L718.15 211.34 L717.86 210.35 L717.58 209.36 L717.3 208.38 L717.02 207.4 L716.74 206.42 L716.47 205.45 L716.2 204.48 L715.93 203.51 L715.66 202.55 L715.4 201.59 L715.14 200.63 L714.88 199.68 L714.62 198.73 L714.36 197.79 L714.11 196.85 L713.85 195.91 L713.6 194.98 L713.35 194.05 L713.1 193.13 L712.85 192.21 L712.61 191.3 L712.36 190.39 L712.11 189.48 L711.87 188.58 L711.62 187.69 L711.38 186.8 L711.13 185.91 L710.88 185.03 L710.64 184.16 L710.39 183.29 L710.14 182.42 L709.89 181.57 L709.64 180.71 L709.39 179.86 L709.14 179.02 L708.88 178.19 L708.63 177.36 L708.37 176.53 L708.1 175.71 L707.84 174.9 L707.57 174.1 L707.3 173.3"/>
<path class="mt" stroke="rgb(255,19,0)" d="M724 143 L723.96 142.83 L723.91 142.66 L723.87 142.49 L723.82 142.32 L723.78 142.15 L723.73 141.98 L723.69 141.81 L723.64 141.64 L723.59 141.47 L723.54 141.31 L723.49 141.14 L723.44 140.97 L723.39 140.81 L723.34 140.64 L723.29 140.48 L723.24 140.32 L723.18 140.15 L723.13 139.99 L723.07 139.83 L723.02 139.67 L722.96 139.51 L722.9 139.35 L722.85 139.19 L722.79 139.03 L722.73 138.87 L722.67 138.72 L722.61 138.56 L722.55 138.4 L722.48 138.25 L722.42 138.09 L722.36 137.94 L722.29 137.79 L722.23 137.63 L722.16 137.48 L722.09 137.33 L722.02 137.18 L721.96 137.03 L721.89 136.88 L721.82 136.73 L721.74 136.58 L721.67 136.44 L721.6 136.29 L721.52 136.14 L721.45 136 L721.37 135.85 L721.3 135.71 L721.22 135.57 L721.14 135.42 L721.06 135.28 L720.98 135.14 L720.9 135"/>
<path class="md" stroke="rgb(255,19,0)" d="M745.86 268.95 L745.33 267.5 L744.81 266.05 L744.3 264.6 L743.8 263.16 L743.3 261.71 L742.82 260.27 L742.34 258.82 L741.87 257.38 L741.42 255.94 L740.97 254.51 L740.53 253.07 L740.1 251.64 L739.68 250.2 L739.27 248.77 L738.86 247.34 L738.47 245.92 L738.08 244.49 L737.71 243.07 L737.34 241.64 L736.98 240.23 L736.63 238.81 L736.29 237.39 L735.95 235.98 L735.63 234.57 L735.31 233.16 L735.01 231.76 L734.71 230.35 L734.41 228.95 L734.13 227.55 L733.86 226.16 L733.59 224.77 L733.33 223.38 L733.08 221.99 L732.84 220.6 L732.6 219.22 L732.37 217.85 L732.15 216.47 L731.94 215.1 L731.74 213.73 L731.54 212.37 L731.35 211.01 L731.16 209.65 L730.98 208.3 L730.81 206.95 L730.65 205.6 L730.49 204.26 L730.33 202.93 L730.19 201.59 L730.05 200.26 L729.91 198.94 L729.78 197.62 L729.66 196.31 L729.54 195 L729.42 193.69 L729.31 192.39 L729.2 191.1 L729.1 189.81 L729 188.53 L728.91 187.25 L728.82 185.98 L728.73 184.71 L728.65 183.45 L728.57 182.2 L728.49 180.95 L728.41 179.71 L728.33 178.47 L728.26 177.25 L728.18 176.03 L728.11 174.82 L728.04 173.61 L727.97 172.41 L727.89 171.22 L727.82 170.04 L727.74 168.87 L727.67 167.71 L727.59 166.55 L727.51 165.4 L727.43 164.27 L727.34 163.14 L727.25 162.02 L727.15 160.91 L727.05 159.82 L726.95 158.73 L726.83 157.65 L726.72 156.59 L726.59 155.53 L726.46 154.49 L726.31 153.46 L726.16 152.44 L726 151.44 L725.83 150.44 L725.65 149.46 L725.46 148.5 L725.25 147.54 L725.03 146.61 L724.79 145.68 L724.55 144.77 L724.28 143.88 L724 143"/>
<path class="mt" stroke="rgb(255,19,0)" d="M721.5 157 L721.44 156.82 L721.38 156.65 L721.31 156.48 L721.25 156.3 L721.19 156.13 L721.12 155.96 L721.06 155.78 L720.99 155.61 L720.93 155.44 L720.86 155.27 L720.8 155.1 L720.73 154.93 L720.66 154.76 L720.6 154.59 L720.53 154.42 L720.46 154.26 L720.39 154.09 L720.32 153.92 L720.25 153.75 L720.18 153.59 L720.11 153.42 L720.04 153.26 L719.97 153.09 L719.9 152.93 L719.83 152.77 L719.75 152.6 L719.68 152.44 L719.61 152.28 L719.53 152.12 L719.46 151.96 L719.38 151.79 L719.31 151.63 L719.23 151.48 L719.15 151.32 L719.08 151.16 L719 151"/>
<path class="md" stroke="rgb(255,19,0)" d="M743.28 270.34 L742.79 269.08 L742.31 267.81 L741.83 266.55 L741.36 265.29 L740.9 264.03 L740.45 262.77 L740 261.51 L739.56 260.25 L739.12 259 L738.69 257.74 L738.27 256.49 L737.86 255.24 L737.45 253.98 L737.06 252.73 L736.66 251.49 L736.28 250.24 L735.9 248.99 L735.53 247.75 L735.16 246.51 L734.81 245.26 L734.45 244.02 L734.11 242.79 L733.77 241.55 L733.44 240.32 L733.12 239.08 L732.8 237.85 L732.49 236.62 L732.19 235.39 L731.89 234.17 L731.6 232.94 L731.31 231.72 L731.04 230.5 L730.76 229.28 L730.5 228.07 L730.24 226.86 L729.99 225.64 L729.74 224.43 L729.5 223.23 L729.26 222.02 L729.03 220.82 L728.81 219.62 L728.59 218.43 L728.38 217.23 L728.17 216.04 L727.97 214.85 L727.78 213.66 L727.59 212.48 L727.4 211.3 L727.22 210.12 L727.05 208.95 L726.88 207.78 L726.71 206.61 L726.55 205.45 L726.4 204.28 L726.25 203.13 L726.1 201.97 L725.96 200.82 L725.82 199.67 L725.68 198.53 L725.55 197.39 L725.43 196.25 L725.3 195.12 L725.19 193.99 L725.07 192.87 L724.96 191.75 L724.85 190.63 L724.74 189.52 L724.63 188.41 L724.53 187.31 L724.43 186.21 L724.34 185.12 L724.24 184.03 L724.15 182.95 L724.05 181.87 L723.96 180.8 L723.87 179.74 L723.78 178.67 L723.69 177.62 L723.61 176.57 L723.52 175.53 L723.43 174.49 L723.34 173.46 L723.25 172.43 L723.16 171.41 L723.07 170.4 L722.98 169.39 L722.89 168.39 L722.79 167.4 L722.69 166.42 L722.59 165.44 L722.49 164.47 L722.38 163.51 L722.27 162.55 L722.15 161.61 L722.03 160.67 L721.91 159.74 L721.78 158.82 L721.64 157.9 L721.5 157"/>
<path class="mt" stroke="rgb(0,215,255)" d="M722.4 159.5 L722.29 159.75 L722.18 160 L722.08 160.25 L721.97 160.5 L721.86 160.75 L721.75 161 L721.65 161.25 L721.54 161.5 L721.43 161.75 L721.33 162 L721.22 162.25 L721.11 162.5 L721.01 162.75 L720.9 163"/>
<path class="md" stroke="rgb(0,215,255)" d="M670.66 113.76 L672.84 113.4 L674.99 113.05 L677.08 112.73 L679.14 112.42 L681.15 112.13 L683.11 111.86 L685.03 111.61 L686.9 111.38 L688.73 111.17 L690.51 110.98 L692.25 110.81 L693.94 110.65 L695.58 110.52 L697.18 110.4 L698.73 110.31 L700.24 110.24 L701.69 110.18 L703.11 110.15 L704.48 110.14 L705.8 110.15 L707.08 110.17 L708.31 110.22 L709.5 110.29 L710.65 110.38 L711.75 110.48 L712.81 110.61 L713.83 110.76 L714.81 110.93 L715.75 111.11 L716.64 111.32 L717.5 111.55 L718.32 111.79 L719.09 112.06 L719.84 112.34 L720.54 112.64 L721.21 112.96 L721.84 113.3 L722.44 113.66 L723.01 114.03 L723.54 114.42 L724.04 114.83 L724.51 115.26 L724.94 115.7 L725.35 116.16 L725.73 116.64 L726.08 117.13 L726.4 117.64 L726.7 118.16 L726.97 118.7 L727.22 119.25 L727.44 119.82 L727.64 120.4 L727.81 121 L727.97 121.61 L728.1 122.24 L728.21 122.88 L728.3 123.53 L728.38 124.19 L728.43 124.87 L728.47 125.56 L728.49 126.26 L728.49 126.97 L728.48 127.7 L728.46 128.43 L728.42 129.18 L728.36 129.94 L728.29 130.71 L728.21 131.49 L728.12 132.28 L728.02 133.07 L727.9 133.88 L727.78 134.7 L727.64 135.53 L727.5 136.36 L727.34 137.21 L727.18 138.06 L727.01 138.92 L726.83 139.79 L726.65 140.67 L726.46 141.56 L726.26 142.45 L726.05 143.35 L725.85 144.26 L725.63 145.18 L725.41 146.1 L725.19 147.03 L724.96 147.96 L724.73 148.91 L724.5 149.86 L724.26 150.81 L724.02 151.77 L723.78 152.74 L723.53 153.71 L723.29 154.69 L723.04 155.67 L722.79 156.66 L722.54 157.66 L722.29 158.65 L722.04 159.66"/>
<path class="mt" stroke="rgb(222,20,255)" d="M774.3 82 L773.74 82.12 L773.18 82.24 L772.62 82.37 L772.05 82.49 L771.48 82.62 L770.9 82.75 L770.33 82.88 L769.75 83.01 L769.16 83.14 L768.58 83.27 L767.99 83.41 L767.4 83.54 L766.8 83.68 L766.2 83.82 L765.6 83.96 L765 84.1"/>
<path class="md" stroke="rgb(222,20,255)" d="M777.56 241.15 L777.51 239.03 L777.47 236.91 L777.44 234.79 L777.43 232.68 L777.43 230.56 L777.46 228.45 L777.49 226.34 L777.54 224.23 L777.61 222.12 L777.69 220.01 L777.79 217.91 L777.91 215.81 L778.03 213.7 L778.18 211.6 L778.33 209.51 L778.51 207.41 L778.69 205.32 L778.9 203.23 L779.11 201.14 L779.34 199.06 L779.59 196.98 L779.84 194.9 L780.12 192.82 L780.4 190.75 L780.7 188.68 L781.01 186.61 L781.34 184.54 L781.67 182.48 L782.02 180.43 L782.39 178.37 L782.76 176.33 L783.15 174.28 L783.54 172.24 L783.95 170.21 L784.37 168.18 L784.8 166.15 L785.24 164.13 L785.69 162.11 L786.15 160.11 L786.62 158.1 L787.1 156.11 L787.59 154.12 L788.08 152.13 L788.58 150.16 L789.09 148.19 L789.6 146.23 L790.12 144.28 L790.65 142.34 L791.18 140.4 L791.71 138.48 L792.24 136.57 L792.78 134.66 L793.31 132.77 L793.85 130.9 L794.39 129.03 L794.92 127.18 L795.45 125.34 L795.97 123.52 L796.49 121.71 L797 119.93 L797.5 118.15 L798 116.4 L798.47 114.67 L798.94 112.96 L799.38 111.28 L799.81 109.61 L800.21 107.98 L800.59 106.37 L800.94 104.79 L801.26 103.24 L801.55 101.72 L801.79 100.24 L802 98.8 L802.16 97.4 L802.26 96.03 L802.31 94.72 L802.3 93.44 L802.22 92.22 L802.06 91.06 L801.83 89.94 L801.51 88.89 L801.09 87.9 L800.57 86.97 L799.94 86.11 L799.19 85.32 L798.32 84.61 L797.31 83.97 L796.17 83.41 L794.87 82.93 L793.42 82.54 L791.8 82.23 L790.01 82.01 L788.05 81.88 L785.9 81.83 L783.57 81.88 L781.06 82.01 L778.35 82.23 L775.45 82.54 L772.37 82.93"/>
<path class="mt" stroke="rgb(222,20,255)" d="M711.5 213.8 L711.3 213.68 L711.1 213.57 L710.9 213.45 L710.7 213.33 L710.5 213.22 L710.3 213.1"/>
<path class="md" stroke="rgb(222,20,255)" d="M761.78 242.94 L761.27 242.59 L760.77 242.24 L760.26 241.89 L759.76 241.54 L759.25 241.2 L758.75 240.85 L758.25 240.51 L757.74 240.17 L757.24 239.82 L756.73 239.48 L756.23 239.14 L755.73 238.8 L755.22 238.47 L754.72 238.13 L754.22 237.79 L753.72 237.46 L753.21 237.12 L752.71 236.79 L752.21 236.46 L751.71 236.13 L751.2 235.8 L750.7 235.47 L750.2 235.14 L749.7 234.81 L749.19 234.49 L748.69 234.16 L748.19 233.84 L747.69 233.52 L747.19 233.19 L746.68 232.87 L746.18 232.55 L745.68 232.24 L745.18 231.92 L744.67 231.6 L744.17 231.29 L743.67 230.97 L743.17 230.66 L742.66 230.35 L742.16 230.04 L741.66 229.73 L741.16 229.42 L740.65 229.12 L740.15 228.81 L739.65 228.51 L739.15 228.2 L738.64 227.9 L738.14 227.6 L737.63 227.3 L737.13 227 L736.63 226.71 L736.12 226.41 L735.62 226.12 L735.11 225.82 L734.61 225.53 L734.1 225.24 L733.6 224.95 L733.09 224.66 L732.59 224.37 L732.08 224.09 L731.58 223.8 L731.07 223.52 L730.56 223.24 L730.06 222.96 L729.55 222.68 L729.04 222.4 L728.53 222.13 L728.02 221.85 L727.52 221.58 L727.01 221.3 L726.5 221.03 L725.99 220.76 L725.48 220.5 L724.97 220.23 L724.45 219.96 L723.94 219.7 L723.43 219.44 L722.92 219.18 L722.4 218.92 L721.89 218.66 L721.38 218.4 L720.86 218.14 L720.35 217.89 L719.83 217.64 L719.32 217.39 L718.8 217.14 L718.28 216.89 L717.76 216.64 L717.25 216.4 L716.73 216.15 L716.21 215.91 L715.69 215.67 L715.17 215.43 L714.64 215.19 L714.12 214.96 L713.6 214.72 L713.08 214.49 L712.55 214.26 L712.03 214.03 L711.5 213.8"/>
<path class="mt" stroke="rgb(102,102,102)" d="M852.2 54.4 L852.69 54.3 L853.17 54.21 L853.65 54.12 L854.12 54.03 L854.58 53.95 L855.04 53.87 L855.49 53.79 L855.93 53.72 L856.37 53.65 L856.8 53.59 L857.22 53.52 L857.64 53.47 L858.05 53.41 L858.45 53.36 L858.85 53.32 L859.24 53.28 L859.63 53.24 L860 53.21 L860.37 53.18 L860.74 53.15 L861.1 53.13 L861.45 53.11 L861.79 53.1 L862.13 53.09 L862.47 53.08 L862.79 53.08 L863.11 53.08 L863.43 53.09 L863.73 53.1 L864.04 53.12 L864.33 53.14 L864.62 53.16 L864.91 53.19 L865.19 53.22 L865.46 53.25 L865.73 53.29 L865.99 53.33 L866.24 53.38 L866.49 53.43 L866.74 53.48 L866.98 53.54 L867.21 53.6 L867.44 53.67 L867.67 53.74 L867.89 53.81 L868.1 53.89 L868.31 53.97 L868.52 54.06 L868.72 54.14 L868.92 54.24 L869.11 54.33 L869.3 54.43 L869.48 54.53 L869.66 54.64 L869.83 54.75 L870.01 54.86 L870.17 54.98 L870.34 55.09 L870.5 55.22 L870.65 55.34 L870.81 55.47 L870.96 55.6 L871.1 55.74 L871.25 55.88 L871.38 56.02 L871.52 56.16 L871.65 56.31 L871.79 56.46 L871.91 56.61 L872.04 56.76 L872.16 56.92 L872.28 57.08 L872.39 57.24 L872.51 57.41 L872.62 57.58 L872.73 57.75 L872.84 57.92 L872.94 58.1 L873.04 58.28 L873.14 58.46 L873.24 58.64 L873.34 58.82 L873.43 59.01 L873.52 59.2 L873.61 59.39 L873.7 59.58 L873.79 59.78 L873.87 59.98 L873.95 60.18 L874.03 60.38 L874.11 60.58 L874.19 60.79 L874.27 60.99 L874.34 61.2 L874.42 61.41 L874.49 61.63 L874.56 61.84 L874.63 62.06 L874.7 62.27 L874.76 62.49 L874.83 62.71 L874.89 62.94 L874.96 63.16 L875.02 63.38 L875.08 63.61 L875.14 63.84 L875.2 64.07 L875.26 64.3 L875.32 64.53 L875.37 64.77 L875.43 65 L875.48 65.24 L875.54 65.48 L875.59 65.71 L875.64 65.95 L875.69 66.2 L875.74 66.44 L875.79 66.68 L875.84 66.93 L875.89 67.17 L875.94 67.42 L875.98 67.67 L876.03 67.92 L876.08 68.17 L876.12 68.42 L876.17 68.67 L876.21 68.92 L876.25 69.18 L876.3 69.43 L876.34 69.69 L876.38 69.95 L876.42 70.2 L876.46 70.46 L876.5 70.72 L876.54 70.98 L876.58 71.24 L876.62 71.51 L876.66 71.77 L876.7 72.03 L876.74 72.3 L876.77 72.56 L876.81 72.83 L876.85 73.1 L876.88 73.36 L876.92 73.63 L876.96 73.9 L876.99 74.17 L877.03 74.44 L877.06 74.71 L877.1 74.98 L877.13 75.25 L877.17 75.53 L877.2 75.8 L877.23 76.07 L877.27 76.35 L877.3 76.62 L877.33 76.9 L877.36 77.18 L877.4 77.45 L877.43 77.73 L877.46 78.01 L877.49 78.29 L877.52 78.57 L877.56 78.85 L877.59 79.13 L877.62 79.41 L877.65 79.69 L877.68 79.97 L877.71 80.25 L877.74 80.53 L877.77 80.82 L877.8 81.1"/>
<path class="md" stroke="rgb(102,102,102)" stroke-opacity=".7" d="M413.78 221.21 L423.38 215.69 L433.39 210.18 L443.82 204.66 L454.63 199.16 L465.83 193.65 L477.4 188.15 L489.33 182.66 L501.61 177.17 L514.22 171.68 L527.15 166.2 L540.39 160.73 L553.93 155.27 L567.74 149.82 L581.8 144.38 L596.11 138.95 L610.65 133.54 L625.38 128.14 L640.3 122.77 L655.38 117.41 L670.58 112.09 L685.89 106.8 L701.27 101.55 L716.67 96.35 L732.06 91.22 L747.36 86.16 L762.52 81.21 L777.45 76.39 L792.01 71.74 L806.06 67.34 L819.4 63.25 L831.75 59.62 L842.79 56.6 L852.2 54.4"/>
<path class="mt" stroke="rgb(102,102,102)" d="M803.6 92.1 L803.03 92.35 L802.47 92.61 L801.9 92.86 L801.33 93.11 L800.76 93.37 L800.2 93.62 L799.63 93.88 L799.06 94.13 L798.48 94.39 L797.91 94.65 L797.34 94.91 L796.77 95.16 L796.2 95.42 L795.62 95.68 L795.05 95.94 L794.47 96.2 L793.9 96.46 L793.32 96.72 L792.75 96.99 L792.17 97.25 L791.59 97.51 L791.02 97.77 L790.44 98.04 L789.86 98.3 L789.28 98.57 L788.7 98.83 L788.12 99.1 L787.54 99.36 L786.96 99.63 L786.38 99.89 L785.8 100.16 L785.22 100.43 L784.64 100.69 L784.06 100.96 L783.47 101.23 L782.89 101.5 L782.31 101.77 L781.72 102.04 L781.14 102.31 L780.56 102.58 L779.97 102.85 L779.39 103.12 L778.8 103.39 L778.22 103.66 L777.63 103.93 L777.05 104.21 L776.46 104.48 L775.87 104.75 L775.29 105.03 L774.7 105.3"/>
<path class="md" stroke="rgb(102,102,102)" stroke-opacity=".7" d="M1079.3 316.44 L1077.95 310.97 L1076.44 305.5 L1074.79 300.04 L1072.99 294.57 L1071.05 289.11 L1068.96 283.64 L1066.73 278.18 L1064.35 272.72 L1061.84 267.26 L1059.2 261.81 L1056.42 256.36 L1053.51 250.91 L1050.47 245.46 L1047.31 240.02 L1044.03 234.58 L1040.63 229.14 L1037.11 223.71 L1033.48 218.29 L1029.74 212.87 L1025.9 207.46 L1021.96 202.06 L1017.93 196.66 L1013.8 191.27 L1009.58 185.9 L1005.29 180.53 L1000.91 175.18 L996.46 169.85 L991.94 164.52 L987.36 159.22 L982.72 153.94 L978.03 148.68 L973.3 143.44 L968.52 138.24 L963.71 133.07 L958.88 127.94 L954.03 122.86 L949.16 117.83 L944.29 112.86 L939.43 107.97 L934.58 103.18 L929.76 98.49 L924.96 93.93 L920.2 89.53 L915.49 85.33 L910.82 81.38 L906.19 77.72 L901.59 74.44 L896.97 71.61 L892.28 69.32 L887.44 67.68 L882.33 66.75 L876.83 66.59 L870.83 67.21 L864.24 68.57 L857.05 70.6 L849.26 73.22 L840.93 76.32 L832.13 79.83 L822.92 83.67 L813.39 87.78 L803.6 92.1"/>
<path class="mt" stroke="rgb(102,102,102)" d="M802.2 103.2 L802.4 103.29 L802.59 103.39 L802.78 103.48 L802.97 103.58 L803.16 103.68 L803.35 103.78 L803.54 103.88 L803.72 103.98 L803.91 104.08 L804.09 104.19 L804.27 104.29 L804.45 104.4 L804.63 104.51 L804.81 104.61 L804.98 104.72 L805.16 104.83 L805.33 104.95 L805.5 105.06 L805.67 105.17 L805.84 105.29 L806.01 105.41 L806.18 105.52 L806.34 105.64 L806.51 105.76 L806.67 105.88 L806.83 106 L806.99 106.13 L807.15 106.25 L807.31 106.38 L807.47 106.5 L807.62 106.63 L807.78 106.76 L807.93 106.89 L808.09 107.02 L808.24 107.15 L808.39 107.28 L808.54 107.42 L808.68 107.55 L808.83 107.69 L808.98 107.82 L809.12 107.96 L809.27 108.1 L809.41 108.24 L809.55 108.38 L809.69 108.52 L809.83 108.67 L809.97 108.81 L810.11 108.95 L810.25 109.1 L810.38 109.25 L810.52 109.39 L810.65 109.54 L810.79 109.69 L810.92 109.84 L811.05 109.99 L811.18 110.15 L811.31 110.3 L811.44 110.45 L811.57 110.61 L811.69 110.76 L811.82 110.92 L811.94 111.08 L812.07 111.24 L812.19 111.4 L812.31 111.56 L812.44 111.72 L812.56 111.88 L812.68 112.04 L812.8 112.21 L812.92 112.37 L813.03 112.54 L813.15 112.71 L813.27 112.87 L813.38 113.04 L813.5 113.21 L813.61 113.38 L813.73 113.55 L813.84 113.72 L813.95 113.89 L814.06 114.07 L814.17 114.24 L814.28 114.42 L814.39 114.59 L814.5 114.77 L814.61 114.95 L814.72 115.12 L814.82 115.3 L814.93 115.48 L815.04 115.66 L815.14 115.84 L815.24 116.03 L815.35 116.21 L815.45 116.39 L815.55 116.58 L815.66 116.76 L815.76 116.95 L815.86 117.13 L815.96 117.32 L816.06 117.51 L816.16 117.7 L816.25 117.88 L816.35 118.07 L816.45 118.26 L816.55 118.46 L816.64 118.65 L816.74 118.84 L816.84 119.03 L816.93 119.23 L817.02 119.42 L817.12 119.62 L817.21 119.81 L817.3 120.01 L817.4 120.21 L817.49 120.41 L817.58 120.61 L817.67 120.8 L817.76 121 L817.85 121.21 L817.94 121.41 L818.03 121.61 L818.12 121.81 L818.21 122.01 L818.3 122.22 L818.39 122.42 L818.47 122.63 L818.56 122.83 L818.65 123.04 L818.73 123.25 L818.82 123.45 L818.91 123.66 L818.99 123.87 L819.08 124.08 L819.16 124.29 L819.24 124.5 L819.33 124.71 L819.41 124.92 L819.5 125.13 L819.58 125.35 L819.66 125.56 L819.74 125.77 L819.82 125.99 L819.91 126.2 L819.99 126.42 L820.07 126.64 L820.15 126.85 L820.23 127.07 L820.31 127.29 L820.39 127.5 L820.47 127.72 L820.55 127.94 L820.63 128.16 L820.71 128.38 L820.78 128.6 L820.86 128.82 L820.94 129.05 L821.02 129.27 L821.1 129.49 L821.17 129.71 L821.25 129.94 L821.33 130.16 L821.4 130.39 L821.48 130.61 L821.56 130.84 L821.63 131.06 L821.71 131.29 L821.78 131.52 L821.86 131.74 L821.93 131.97 L822.01 132.2 L822.08 132.43 L822.16 132.66 L822.23 132.89 L822.31 133.12 L822.38 133.35 L822.45 133.58 L822.53 133.81 L822.6 134.04 L822.68 134.28 L822.75 134.51 L822.82 134.74 L822.89 134.98 L822.97 135.21 L823.04 135.44 L823.11 135.68 L823.18 135.91 L823.26 136.15 L823.33 136.39 L823.4 136.62 L823.47 136.86 L823.54 137.1 L823.61 137.34 L823.69 137.57 L823.76 137.81 L823.83 138.05 L823.9 138.29 L823.97 138.53 L824.04 138.77 L824.11 139.01 L824.18 139.25 L824.25 139.49 L824.32 139.73 L824.39 139.98 L824.46 140.22 L824.53 140.46 L824.6 140.7 L824.67 140.95 L824.74 141.19 L824.81 141.44 L824.88 141.68 L824.95 141.92 L825.02 142.17 L825.09 142.42 L825.16 142.66 L825.23 142.91 L825.3 143.15 L825.37 143.4 L825.44 143.65 L825.51 143.9 L825.58 144.14 L825.65 144.39 L825.71 144.64 L825.78 144.89 L825.85 145.14 L825.92 145.39 L825.99 145.64 L826.06 145.89 L826.13 146.14 L826.2 146.39 L826.27 146.64 L826.33 146.89 L826.4 147.14 L826.47 147.4 L826.54 147.65 L826.61 147.9 L826.68 148.15 L826.75 148.41 L826.81 148.66 L826.88 148.91 L826.95 149.17 L827.02 149.42 L827.09 149.68 L827.16 149.93 L827.22 150.19 L827.29 150.44 L827.36 150.7 L827.43 150.95 L827.5 151.21 L827.57 151.47 L827.63 151.72 L827.7 151.98 L827.77 152.24 L827.84 152.5 L827.91 152.75 L827.98 153.01 L828.04 153.27 L828.11 153.53 L828.18 153.79 L828.25 154.05 L828.32 154.31 L828.39 154.57 L828.46 154.83 L828.52 155.09 L828.59 155.35 L828.66 155.61 L828.73 155.87 L828.8 156.13 L828.87 156.39 L828.94 156.65 L829 156.92 L829.07 157.18 L829.14 157.44 L829.21 157.7 L829.28 157.97 L829.35 158.23 L829.42 158.49 L829.49 158.76 L829.56 159.02 L829.63 159.29 L829.69 159.55 L829.76 159.81 L829.83 160.08 L829.9 160.34 L829.97 160.61 L830.04 160.87 L830.11 161.14 L830.18 161.41 L830.25 161.67 L830.32 161.94 L830.39 162.2 L830.46 162.47 L830.53 162.74 L830.6 163.01 L830.67 163.27 L830.74 163.54 L830.81 163.81 L830.88 164.08 L830.95 164.34 L831.02 164.61 L831.09 164.88 L831.16 165.15 L831.23 165.42 L831.3 165.69 L831.37 165.96 L831.44 166.23 L831.51 166.5 L831.58 166.77 L831.65 167.04 L831.72 167.31 L831.79 167.58 L831.86 167.85 L831.94 168.12 L832.01 168.39 L832.08 168.66 L832.15 168.93 L832.22 169.2 L832.29 169.48 L832.36 169.75 L832.43 170.02 L832.51 170.29 L832.58 170.57 L832.65 170.84 L832.72 171.11 L832.79 171.38 L832.87 171.66 L832.94 171.93 L833.01 172.2 L833.08 172.48 L833.15 172.75 L833.23 173.03 L833.3 173.3"/>
<path class="md" stroke="rgb(102,102,102)" stroke-opacity=".7" d="M421.63 220.43 L431.93 215.42 L442.53 210.43 L453.42 205.47 L464.58 200.53 L476 195.62 L487.66 190.74 L499.53 185.9 L511.61 181.09 L523.86 176.33 L536.26 171.61 L548.8 166.94 L561.43 162.33 L574.15 157.78 L586.91 153.3 L599.69 148.89 L612.46 144.58 L625.17 140.35 L637.79 136.24 L650.27 132.25 L662.58 128.39 L674.67 124.68 L686.48 121.14 L697.97 117.79 L709.09 114.64 L719.77 111.74 L729.98 109.09 L739.65 106.73 L748.75 104.68 L757.23 102.96 L765.07 101.61 L772.25 100.63 L778.77 100.06 L784.63 99.88 L789.86 100.12 L794.51 100.76 L798.6 101.79 L802.2 103.2"/>
<path class="mt" stroke="rgb(102,102,102)" d="M793.3 121.9 L792.83 122.14 L792.36 122.38 L791.89 122.62 L791.42 122.86 L790.95 123.09 L790.48 123.34 L790.01 123.58 L789.54 123.82 L789.07 124.06 L788.6 124.3 L788.13 124.54 L787.66 124.79 L787.19 125.03 L786.71 125.27 L786.24 125.52 L785.77 125.76 L785.3 126.01 L784.82 126.25 L784.35 126.5 L783.88 126.74 L783.4 126.99 L782.93 127.24 L782.46 127.48 L781.98 127.73 L781.51 127.98 L781.03 128.23 L780.56 128.48 L780.08 128.73 L779.61 128.98 L779.13 129.23 L778.66 129.48 L778.18 129.73 L777.7 129.98 L777.23 130.23 L776.75 130.48 L776.27 130.73 L775.8 130.99 L775.32 131.24 L774.84 131.49 L774.37 131.75 L773.89 132 L773.41 132.25 L772.94 132.51 L772.46 132.76 L771.98 133.02 L771.5 133.27 L771.02 133.53 L770.55 133.78 L770.07 134.04 L769.59 134.3 L769.11 134.56 L768.63 134.81 L768.16 135.07 L767.68 135.33 L767.2 135.59 L766.72 135.84 L766.24 136.1 L765.76 136.36 L765.28 136.62 L764.8 136.88 L764.32 137.14 L763.85 137.4 L763.37 137.66 L762.89 137.92 L762.41 138.19 L761.93 138.45 L761.45 138.71 L760.97 138.97 L760.49 139.23 L760.01 139.5 L759.53 139.76 L759.05 140.02 L758.57 140.29 L758.09 140.55 L757.61 140.81 L757.14 141.08 L756.66 141.34 L756.18 141.61 L755.7 141.87 L755.22 142.14 L754.74 142.4 L754.26 142.67 L753.78 142.93 L753.3 143.2"/>
<path class="md" stroke="rgb(102,102,102)" stroke-opacity=".7" d="M1140.51 412.76 L1141.91 407.57 L1143.14 402.36 L1144.18 397.14 L1145.04 391.92 L1145.71 386.68 L1146.2 381.44 L1146.5 376.19 L1146.6 370.94 L1146.52 365.68 L1146.24 360.42 L1145.77 355.15 L1145.1 349.87 L1144.25 344.6 L1143.2 339.32 L1141.95 334.04 L1140.52 328.76 L1138.89 323.48 L1137.08 318.2 L1135.08 312.92 L1132.89 307.63 L1130.52 302.35 L1127.96 297.08 L1125.23 291.8 L1122.32 286.53 L1119.23 281.26 L1115.97 275.99 L1112.54 270.73 L1108.95 265.48 L1105.2 260.23 L1101.29 254.98 L1097.22 249.75 L1093.01 244.52 L1088.65 239.3 L1084.15 234.1 L1079.51 228.9 L1074.74 223.71 L1069.85 218.54 L1064.84 213.39 L1059.71 208.25 L1054.48 203.13 L1049.14 198.03 L1043.71 192.95 L1038.19 187.89 L1032.59 182.86 L1026.91 177.87 L1021.16 172.9 L1015.35 167.97 L1009.5 163.09 L1003.6 158.25 L997.66 153.45 L991.7 148.72 L985.72 144.05 L979.74 139.46 L973.76 134.94 L967.79 130.52 L961.85 126.21 L955.94 122.01 L950.07 117.96 L944.26 114.05 L938.51 110.33 L932.83 106.81 L927.22 103.53 L921.68 100.5 L916.21 97.78 L910.8 95.38 L905.43 93.36 L900.08 91.74 L894.71 90.56 L889.28 89.83 L883.75 89.59 L878.09 89.82 L872.24 90.53 L866.18 91.7 L859.89 93.31 L853.35 95.32 L846.56 97.71 L839.54 100.42 L832.28 103.44 L824.81 106.72 L817.15 110.23 L809.33 113.95 L801.37 117.85 L793.3 121.9"/>
<path class="mt" stroke="rgb(102,102,102)" d="M880.4 116.7 L880.43 117.01 L880.47 117.31 L880.5 117.62 L880.54 117.93 L880.57 118.24 L880.61 118.54 L880.64 118.85 L880.68 119.16 L880.71 119.47 L880.75 119.77 L880.79 120.08 L880.82 120.39 L880.86 120.7 L880.89 121.01 L880.93 121.32 L880.96 121.62 L881 121.93 L881.03 122.24 L881.07 122.55 L881.1 122.86 L881.14 123.17 L881.17 123.48 L881.21 123.79 L881.25 124.1 L881.28 124.41 L881.32 124.72 L881.35 125.03 L881.39 125.34 L881.43 125.64 L881.46 125.95 L881.5 126.26 L881.53 126.57 L881.57 126.88 L881.61 127.19 L881.64 127.51 L881.68 127.82 L881.71 128.13 L881.75 128.44 L881.79 128.75 L881.82 129.06 L881.86 129.37 L881.9 129.68 L881.93 129.99 L881.97 130.3 L882.01 130.61 L882.04 130.92 L882.08 131.23 L882.12 131.55 L882.15 131.86 L882.19 132.17 L882.23 132.48 L882.26 132.79 L882.3 133.1 L882.34 133.41 L882.37 133.73 L882.41 134.04 L882.45 134.35 L882.49 134.66 L882.52 134.97 L882.56 135.29 L882.6 135.6 L882.63 135.91 L882.67 136.22 L882.71 136.54 L882.75 136.85 L882.78 137.16 L882.82 137.47 L882.86 137.79 L882.9 138.1 L882.93 138.41 L882.97 138.72 L883.01 139.04 L883.05 139.35 L883.09 139.66 L883.12 139.98 L883.16 140.29 L883.2 140.6 L883.24 140.91 L883.28 141.23 L883.31 141.54 L883.35 141.85 L883.39 142.17 L883.43 142.48 L883.47 142.79 L883.51 143.11 L883.54 143.42 L883.58 143.74 L883.62 144.05 L883.66 144.36 L883.7 144.68 L883.74 144.99 L883.78 145.3 L883.82 145.62 L883.85 145.93 L883.89 146.25 L883.93 146.56 L883.97 146.87 L884.01 147.19 L884.05 147.5 L884.09 147.82 L884.13 148.13 L884.17 148.45 L884.21 148.76 L884.25 149.07 L884.28 149.39 L884.32 149.7 L884.36 150.02 L884.4 150.33 L884.44 150.65 L884.48 150.96 L884.52 151.28 L884.56 151.59 L884.6 151.91 L884.64 152.22 L884.68 152.54 L884.72 152.85 L884.76 153.17 L884.8 153.48 L884.84 153.8 L884.88 154.11 L884.92 154.43 L884.96 154.74 L885 155.06 L885.04 155.37 L885.08 155.69 L885.12 156 L885.16 156.32 L885.2 156.63 L885.24 156.95 L885.28 157.27 L885.32 157.58 L885.36 157.9 L885.41 158.21 L885.45 158.53 L885.49 158.84 L885.53 159.16 L885.57 159.48 L885.61 159.79 L885.65 160.11 L885.69 160.42 L885.73 160.74 L885.77 161.05 L885.81 161.37 L885.86 161.69 L885.9 162 L885.94 162.32 L885.98 162.63 L886.02 162.95 L886.06 163.27 L886.1 163.58 L886.14 163.9 L886.19 164.22 L886.23 164.53 L886.27 164.85 L886.31 165.16 L886.35 165.48 L886.39 165.8 L886.44 166.11 L886.48 166.43 L886.52 166.75 L886.56 167.06 L886.6 167.38 L886.65 167.7 L886.69 168.01 L886.73 168.33 L886.77 168.65 L886.81 168.96 L886.86 169.28 L886.9 169.6 L886.94 169.91 L886.98 170.23 L887.02 170.55 L887.07 170.86 L887.11 171.18 L887.15 171.5 L887.19 171.81 L887.24 172.13 L887.28 172.45 L887.32 172.77 L887.37 173.08 L887.41 173.4 L887.45 173.72 L887.49 174.03 L887.54 174.35 L887.58 174.67 L887.62 174.99 L887.67 175.3 L887.71 175.62 L887.75 175.94 L887.79 176.26 L887.84 176.57 L887.88 176.89 L887.92 177.21 L887.97 177.52 L888.01 177.84 L888.05 178.16 L888.1 178.48 L888.14 178.79 L888.18 179.11 L888.23 179.43 L888.27 179.75 L888.32 180.06 L888.36 180.38 L888.4 180.7 L888.45 181.02 L888.49 181.34 L888.53 181.65 L888.58 181.97 L888.62 182.29 L888.67 182.61 L888.71 182.92 L888.75 183.24 L888.8 183.56 L888.84 183.88 L888.89 184.2 L888.93 184.51 L888.97 184.83 L889.02 185.15 L889.06 185.47 L889.11 185.78 L889.15 186.1 L889.2 186.42 L889.24 186.74 L889.28 187.06 L889.33 187.37 L889.37 187.69 L889.42 188.01 L889.46 188.33 L889.51 188.65 L889.55 188.97 L889.6 189.28 L889.64 189.6 L889.69 189.92 L889.73 190.24 L889.78 190.56 L889.82 190.87 L889.87 191.19 L889.91 191.51 L889.96 191.83 L890 192.15 L890.05 192.47 L890.09 192.78 L890.14 193.1 L890.18 193.42 L890.23 193.74 L890.27 194.06 L890.32 194.38 L890.36 194.7 L890.41 195.01 L890.45 195.33 L890.5 195.65 L890.54 195.97 L890.59 196.29 L890.64 196.61 L890.68 196.93 L890.73 197.24 L890.77 197.56 L890.82 197.88 L890.86 198.2 L890.91 198.52 L890.96 198.84 L891 199.16 L891.05 199.47 L891.09 199.79 L891.14 200.11 L891.18 200.43 L891.23 200.75 L891.28 201.07 L891.32 201.39 L891.37 201.71 L891.42 202.02 L891.46 202.34 L891.51 202.66 L891.55 202.98 L891.6 203.3"/>
<path class="md" stroke="rgb(102,102,102)" stroke-opacity=".7" d="M424.36 217.27 L434.25 211.77 L444.53 206.27 L455.2 200.77 L466.26 195.28 L477.68 189.8 L489.46 184.32 L501.59 178.84 L514.04 173.37 L526.82 167.91 L539.89 162.46 L553.26 157.02 L566.89 151.59 L580.79 146.17 L594.92 140.77 L609.26 135.38 L623.81 130.01 L638.53 124.66 L653.4 119.35 L668.4 114.06 L683.49 108.8 L698.64 103.6 L713.81 98.45 L728.95 93.36 L744 88.36 L758.9 83.47 L773.55 78.72 L787.84 74.14 L801.63 69.81 L814.73 65.79 L826.91 62.2 L837.89 59.19 L847.38 56.92 L855.16 55.58 L861.19 55.31 L865.61 56.12 L868.74 57.95 L870.95 60.61 L872.55 63.94 L873.75 67.76 L874.71 71.94 L875.5 76.41 L876.21 81.08 L876.85 85.91 L877.46 90.85 L878.05 95.9 L878.63 101.02 L879.22 106.2 L879.8 111.43 L880.4 116.7"/>
<path class="mt" stroke="rgb(102,102,102)" d="M875.6 202.2 L875.38 201.99 L875.15 201.79 L874.93 201.58 L874.7 201.38 L874.48 201.17 L874.26 200.97 L874.03 200.76 L873.81 200.56 L873.58 200.35 L873.36 200.15 L873.14 199.94 L872.91 199.74 L872.69 199.54 L872.46 199.33 L872.24 199.13 L872.02 198.93 L871.79 198.73 L871.57 198.53 L871.34 198.32 L871.12 198.12 L870.9 197.92 L870.67 197.72 L870.45 197.52 L870.22 197.32 L870 197.12 L869.78 196.92 L869.55 196.72 L869.33 196.52 L869.1 196.32 L868.88 196.12 L868.66 195.92 L868.43 195.72 L868.21 195.53 L867.98 195.33 L867.76 195.13 L867.54 194.93 L867.31 194.74 L867.09 194.54 L866.86 194.34 L866.64 194.15 L866.42 193.95 L866.19 193.75 L865.97 193.56 L865.74 193.36 L865.52 193.17 L865.3 192.98 L865.07 192.78 L864.85 192.59 L864.62 192.39 L864.4 192.2"/>
<path class="md" stroke="rgb(102,102,102)" stroke-opacity=".7" d="M1052.38 424.16 L1050.21 420.3 L1048 416.39 L1045.74 412.43 L1043.44 408.42 L1041.09 404.37 L1038.69 400.29 L1036.23 396.17 L1033.72 392.01 L1031.15 387.83 L1028.52 383.62 L1025.83 379.38 L1023.09 375.12 L1020.29 370.84 L1017.42 366.54 L1014.5 362.22 L1011.52 357.89 L1008.49 353.54 L1005.39 349.19 L1002.25 344.82 L999.04 340.44 L995.79 336.06 L992.48 331.67 L989.13 327.27 L985.72 322.88 L982.27 318.48 L978.78 314.09 L975.24 309.69 L971.67 305.3 L968.05 300.92 L964.4 296.54 L960.72 292.17 L957 287.81 L953.26 283.46 L949.49 279.12 L945.69 274.8 L941.88 270.5 L938.04 266.22 L934.19 261.95 L930.32 257.71 L926.43 253.5 L922.54 249.31 L918.64 245.15 L914.73 241.02 L910.82 236.93 L906.9 232.88 L902.98 228.86 L899.06 224.89 L895.15 220.97 L891.23 217.1 L887.32 213.28 L883.41 209.52 L879.5 205.83 L875.6 202.2"/>
<path class="mt" stroke="rgb(102,102,102)" d="M776.7 200.7 L776.4 200.98 L776.11 201.27 L775.82 201.55 L775.52 201.83 L775.23 202.12 L774.93 202.4 L774.64 202.68 L774.35 202.97 L774.05 203.25 L773.76 203.53 L773.47 203.82 L773.17 204.1 L772.88 204.39 L772.59 204.67 L772.3 204.95 L772.01 205.24 L771.72 205.52 L771.42 205.81 L771.13 206.09 L770.84 206.38 L770.55 206.66 L770.26 206.95 L769.97 207.23 L769.68 207.52 L769.4 207.8 L769.11 208.09 L768.82 208.37 L768.53 208.66 L768.24 208.94 L767.95 209.23 L767.67 209.51 L767.38 209.8 L767.09 210.08 L766.81 210.37 L766.52 210.65 L766.23 210.94 L765.95 211.23 L765.66 211.51 L765.38 211.8 L765.09 212.09 L764.81 212.37 L764.52 212.66 L764.24 212.94 L763.96 213.23 L763.67 213.52 L763.39 213.8 L763.11 214.09 L762.82 214.38 L762.54 214.66 L762.26 214.95 L761.98 215.24 L761.7 215.53 L761.42 215.81 L761.14 216.1 L760.85 216.39 L760.57 216.67 L760.29 216.96 L760.02 217.25 L759.74 217.54 L759.46 217.82 L759.18 218.11 L758.9 218.4"/>
<path class="md" stroke="rgb(102,102,102)" stroke-opacity=".7" d="M1277.36 316.55 L1275.04 311.31 L1272.43 306.08 L1269.53 300.84 L1266.34 295.61 L1262.87 290.38 L1259.11 285.16 L1255.08 279.93 L1250.77 274.72 L1246.19 269.51 L1241.35 264.3 L1236.25 259.1 L1230.89 253.91 L1225.29 248.73 L1219.44 243.56 L1213.36 238.4 L1207.06 233.25 L1200.53 228.11 L1193.79 222.99 L1186.84 217.88 L1179.7 212.79 L1172.37 207.72 L1164.86 202.67 L1157.18 197.64 L1149.35 192.64 L1141.37 187.67 L1133.26 182.73 L1125.03 177.82 L1116.68 172.95 L1108.24 168.12 L1099.72 163.34 L1091.12 158.61 L1082.48 153.93 L1073.81 149.33 L1065.12 144.79 L1056.43 140.34 L1047.76 135.97 L1039.14 131.71 L1030.58 127.57 L1022.12 123.56 L1013.76 119.69 L1005.55 116 L997.51 112.49 L989.65 109.2 L982.01 106.16 L974.6 103.38 L967.45 100.91 L960.57 98.76 L953.96 96.99 L947.62 95.6 L941.54 94.63 L935.7 94.1 L930.07 94.01 L924.62 94.37 L919.3 95.17 L914.08 96.4 L908.93 98.02 L903.81 100.03 L898.69 102.37 L893.56 105.04 L888.4 107.98 L883.2 111.18 L877.96 114.6 L872.68 118.23 L867.36 122.03 L861.99 125.98 L856.6 130.08 L851.18 134.29 L845.74 138.62 L840.29 143.04 L834.84 147.54 L829.38 152.12 L823.94 156.77 L818.52 161.48 L813.13 166.24 L807.77 171.05 L802.45 175.91 L797.18 180.8 L791.96 185.73 L786.8 190.69 L781.72 195.68 L776.7 200.7"/>
<path class="mt" stroke="rgb(102,102,102)" d="M671.1 149.3 L670.87 149.24 L670.65 149.18 L670.42 149.13 L670.19 149.07 L669.96 149.02 L669.73 148.96 L669.5 148.91 L669.26 148.86 L669.03 148.8 L668.79 148.75 L668.56 148.7 L668.32 148.65 L668.08 148.6 L667.84 148.55 L667.6 148.5 L667.35 148.46 L667.11 148.41 L666.86 148.36 L666.62 148.32 L666.37 148.27 L666.12 148.23 L665.87 148.19 L665.62 148.15 L665.37 148.1 L665.11 148.06 L664.86 148.02 L664.6 147.98 L664.34 147.95 L664.08 147.91 L663.82 147.87 L663.56 147.84 L663.3 147.8"/>
<path class="md" stroke="rgb(102,102,102)" stroke-opacity=".7" d="M875.21 427.3 L870.85 423.36 L866.5 419.36 L862.16 415.32 L857.83 411.24 L853.52 407.12 L849.23 402.95 L844.96 398.75 L840.72 394.52 L836.5 390.26 L832.31 385.98 L828.16 381.66 L824.05 377.33 L819.98 372.97 L815.94 368.6 L811.96 364.2 L808.02 359.8 L804.14 355.37 L800.3 350.94 L796.53 346.5 L792.82 342.04 L789.16 337.58 L785.58 333.12 L782.05 328.65 L778.6 324.18 L775.22 319.7 L771.92 315.23 L768.68 310.76 L765.53 306.29 L762.45 301.83 L759.45 297.37 L756.54 292.92 L753.7 288.48 L750.95 284.05 L748.28 279.63 L745.7 275.22 L743.2 270.84 L740.78 266.47 L738.45 262.11 L736.2 257.78 L734.03 253.48 L731.94 249.2 L729.93 244.95 L728 240.72 L726.14 236.53 L724.36 232.38 L722.64 228.27 L720.99 224.19 L719.4 220.17 L717.86 216.19 L716.38 212.26 L714.94 208.39 L713.53 204.58 L712.16 200.84 L710.81 197.16 L709.48 193.56 L708.14 190.04 L706.8 186.61 L705.44 183.27 L704.04 180.03 L702.6 176.89 L701.1 173.87 L699.51 170.97 L697.83 168.19 L696.04 165.55 L694.1 163.06 L692.02 160.72 L689.75 158.54 L687.28 156.53 L684.59 154.7 L681.64 153.05 L678.43 151.6 L674.92 150.35 L671.1 149.3"/>
<path class="mt" stroke="rgb(102,102,102)" d="M737.1 202.4 L736.75 202.66 L736.41 202.91 L736.06 203.17 L735.72 203.42 L735.38 203.68 L735.03 203.93 L734.69 204.19 L734.34 204.44 L734 204.7"/>
<path class="md" stroke="rgb(102,102,102)" stroke-opacity=".7" d="M1222.93 352.37 L1221.68 347.42 L1220.21 342.47 L1218.51 337.52 L1216.59 332.56 L1214.45 327.6 L1212.09 322.63 L1209.51 317.67 L1206.71 312.71 L1203.7 307.74 L1200.48 302.78 L1197.04 297.83 L1193.4 292.88 L1189.56 287.93 L1185.51 282.99 L1181.27 278.06 L1176.84 273.14 L1172.22 268.22 L1167.42 263.32 L1162.44 258.43 L1157.29 253.55 L1151.98 248.69 L1146.51 243.85 L1140.88 239.02 L1135.1 234.21 L1129.19 229.43 L1123.14 224.67 L1116.97 219.93 L1110.68 215.23 L1104.28 210.56 L1097.78 205.92 L1091.19 201.31 L1084.51 196.75 L1077.76 192.24 L1070.95 187.77 L1064.08 183.35 L1057.17 179 L1050.22 174.7 L1043.26 170.48 L1036.28 166.33 L1029.3 162.27 L1022.33 158.3 L1015.39 154.42 L1008.48 150.66 L1001.62 147.02 L994.81 143.52 L988.08 140.15 L981.42 136.95 L974.85 133.92 L968.37 131.08 L962 128.44 L955.73 126.02 L949.57 123.85 L943.51 121.92 L937.56 120.27 L931.71 118.9 L925.94 117.83 L920.24 117.07 L914.59 116.62 L908.99 116.5 L903.41 116.7 L897.83 117.22 L892.24 118.06 L886.61 119.2 L880.94 120.63 L875.21 122.35 L869.41 124.34 L863.54 126.58 L857.6 129.05 L851.57 131.73 L845.47 134.62 L839.3 137.69 L833.05 140.94 L826.75 144.33 L820.4 147.87 L814 151.54 L807.56 155.33 L801.1 159.23 L794.62 163.22 L788.13 167.31 L781.65 171.47 L775.17 175.71 L768.72 180.02 L762.3 184.39 L755.92 188.82 L749.58 193.3 L743.31 197.83 L737.1 202.4"/>
<path class="mt" stroke="rgb(102,102,102)" d="M788.3 257.5 L788.16 257.81 L788.02 258.11 L787.88 258.42 L787.74 258.73 L787.6 259.03 L787.46 259.34 L787.32 259.65 L787.18 259.95 L787.04 260.26 L786.9 260.57 L786.76 260.87 L786.63 261.18 L786.49 261.49 L786.35 261.79 L786.21 262.1 L786.08 262.41 L785.94 262.71 L785.81 263.02 L785.67 263.33 L785.54 263.63 L785.4 263.94 L785.27 264.25 L785.13 264.55 L785 264.86 L784.86 265.17 L784.73 265.47 L784.6 265.78 L784.46 266.09 L784.33 266.39 L784.2 266.7"/>
<path class="md" stroke="rgb(102,102,102)" stroke-opacity=".7" d="M1321.57 263.79 L1316.35 258.34 L1310.78 252.88 L1304.87 247.43 L1298.62 241.98 L1292.03 236.53 L1285.11 231.09 L1277.88 225.66 L1270.33 220.23 L1262.48 214.8 L1254.33 209.38 L1245.9 203.97 L1237.18 198.57 L1228.2 193.17 L1218.96 187.78 L1209.47 182.41 L1199.75 177.05 L1189.8 171.7 L1179.64 166.36 L1169.28 161.04 L1158.73 155.74 L1148.02 150.46 L1137.15 145.21 L1126.14 139.98 L1115.02 134.79 L1103.79 129.63 L1092.49 124.52 L1081.14 119.46 L1069.76 114.45 L1058.38 109.51 L1047.05 104.66 L1035.79 99.91 L1024.66 95.28 L1013.71 90.79 L1003 86.49 L992.6 82.4 L982.6 78.6 L973.09 75.13 L964.16 72.09 L955.9 69.56 L948.39 67.64 L941.65 66.42 L935.65 65.97 L930.33 66.3 L925.54 67.41 L921.15 69.23 L917.03 71.67 L913.08 74.64 L909.22 78.04 L905.41 81.8 L901.61 85.84 L897.81 90.12 L893.99 94.58 L890.17 99.19 L886.33 103.93 L882.48 108.76 L878.62 113.69 L874.77 118.68 L870.92 123.74 L867.07 128.85 L863.24 134 L859.43 139.19 L855.64 144.41 L851.87 149.66 L848.14 154.93 L844.44 160.23 L840.79 165.54 L837.18 170.88 L833.61 176.23 L830.1 181.59 L826.65 186.96 L823.25 192.35 L819.92 197.74 L816.65 203.14 L813.45 208.55 L810.33 213.97 L807.28 219.39 L804.31 224.83 L801.42 230.26 L798.61 235.7 L795.9 241.15 L793.27 246.59 L790.74 252.05 L788.3 257.5"/>
<path class="mt" stroke="rgb(102,102,102)" d="M821.2 108.4 L820.85 108.72 L820.51 109.04 L820.16 109.37 L819.82 109.69 L819.48 110.01 L819.13 110.33 L818.79 110.66 L818.44 110.98 L818.1 111.3"/>
<path class="md" stroke="rgb(102,102,102)" stroke-opacity=".7" d="M1142.2 400.35 L1143.14 395.14 L1143.89 389.91 L1144.46 384.68 L1144.84 379.44 L1145.03 374.2 L1145.04 368.95 L1144.85 363.69 L1144.47 358.43 L1143.9 353.17 L1143.14 347.9 L1142.19 342.63 L1141.04 337.36 L1139.71 332.08 L1138.19 326.81 L1136.48 321.53 L1134.58 316.25 L1132.49 310.98 L1130.23 305.7 L1127.78 300.43 L1125.15 295.16 L1122.34 289.89 L1119.36 284.62 L1116.21 279.36 L1112.89 274.1 L1109.4 268.85 L1105.75 263.6 L1101.94 258.36 L1097.98 253.12 L1093.87 247.9 L1089.61 242.68 L1085.21 237.47 L1080.68 232.27 L1076.01 227.09 L1071.21 221.92 L1066.29 216.76 L1061.26 211.61 L1056.11 206.49 L1050.87 201.38 L1045.52 196.3 L1040.08 191.24 L1034.56 186.2 L1028.96 181.19 L1023.28 176.22 L1017.55 171.27 L1011.76 166.37 L1005.92 161.51 L1000.04 156.7 L994.13 151.94 L988.2 147.24 L982.26 142.62 L976.32 138.06 L970.38 133.6 L964.46 129.23 L958.57 124.97 L952.72 120.85 L946.91 116.86 L941.16 113.04 L935.47 109.41 L929.85 106 L924.3 102.82 L918.82 99.92 L913.4 97.34 L908.03 95.09 L902.69 93.23 L897.34 91.78 L891.96 90.77 L886.51 90.23 L880.93 90.16 L875.2 90.57 L869.28 91.44 L863.13 92.77 L856.74 94.51 L850.11 96.65 L843.22 99.14 L836.1 101.95 L828.75 105.05 L821.2 108.4"/>
<path class="mt" stroke="rgb(102,102,102)" d="M783.3 244.2 L783.07 244.4 L782.83 244.6 L782.6 244.8"/>
<path class="md" stroke="rgb(102,102,102)" stroke-opacity=".7" d="M1279.83 308.33 L1275.6 304.03 L1271.17 299.73 L1266.55 295.45 L1261.75 291.17 L1256.75 286.9 L1251.58 282.65 L1246.23 278.41 L1240.71 274.19 L1235.03 269.99 L1229.19 265.8 L1223.2 261.64 L1217.06 257.5 L1210.78 253.39 L1204.38 249.31 L1197.85 245.26 L1191.21 241.25 L1184.46 237.27 L1177.61 233.33 L1170.67 229.43 L1163.65 225.58 L1156.56 221.78 L1149.41 218.04 L1142.21 214.35 L1134.96 210.72 L1127.69 207.16 L1120.39 203.66 L1113.08 200.24 L1105.76 196.91 L1098.46 193.65 L1091.18 190.49 L1083.92 187.42 L1076.7 184.46 L1069.53 181.6 L1062.42 178.87 L1055.38 176.25 L1048.4 173.76 L1041.51 171.41 L1034.71 169.2 L1028.01 167.14 L1021.4 165.24 L1014.9 163.51 L1008.5 161.94 L1002.21 160.55 L996.02 159.34 L989.95 158.33 L983.97 157.5 L978.1 156.87 L972.32 156.44 L966.64 156.21 L961.04 156.19 L955.51 156.36 L950.06 156.74 L944.66 157.32 L939.32 158.09 L934.02 159.06 L928.75 160.21 L923.52 161.56 L918.31 163.08 L913.11 164.77 L907.92 166.63 L902.74 168.64 L897.56 170.81 L892.37 173.13 L887.18 175.58 L881.98 178.16 L876.77 180.87 L871.55 183.7 L866.32 186.63 L861.08 189.67 L855.84 192.81 L850.59 196.04 L845.34 199.36 L840.09 202.75 L834.84 206.23 L829.6 209.77 L824.36 213.39 L819.14 217.06 L813.94 220.79 L808.76 224.58 L803.6 228.41 L798.47 232.3 L793.37 236.23 L788.32 240.19 L783.3 244.2"/>
<path d="M737.41 270.84h6.94M740.88 267.37v6.94" stroke="#f00" stroke-width="1.389" fill="none"/>
<path d="M738.23 271.5h6.94M741.7 268.03v6.94" stroke="#f00" stroke-width="1.389" fill="none"/>
<path d="M742.39 268.95h6.94M745.86 265.48v6.94" stroke="#f00" stroke-width="1.389" fill="none"/>
<path d="M739.81 270.34h6.94M743.28 266.87v6.94" stroke="#f00" stroke-width="1.389" fill="none"/>
<path d="M667.19 113.76h6.94M670.66 110.29v6.94" stroke="#f00" stroke-width="1.389" fill="none"/>
<path d="M774.09 241.15h6.94M777.56 237.68v6.94" stroke="#f00" stroke-width="1.389" fill="none"/>
<path d="M758.31 242.94h6.94M761.78 239.47v6.94" stroke="#f00" stroke-width="1.389" fill="none"/>
<path d="M1199 132.2h2.8M1200.4 130.8v2.8" stroke="#ff6347" stroke-width="1.3" fill="none"/>
<path d="M691.3 150h2.8M692.7 148.6v2.8" stroke="#ff6347" stroke-width="1.3" fill="none"/>
<path d="M719.5 135h2.8M720.9 133.6v2.8" stroke="#ff6347" stroke-width="1.3" fill="none"/>
<path d="M717.6 151h2.8M719 149.6v2.8" stroke="#ff6347" stroke-width="1.3" fill="none"/>
<path d="M719.5 163h2.8M720.9 161.6v2.8" stroke="#ff6347" stroke-width="1.3" fill="none"/>
<path d="M763.6 84.1h2.8M765 82.7v2.8" stroke="#ff6347" stroke-width="1.3" fill="none"/>
<path d="M708.9 213.1h2.8M710.3 211.7v2.8" stroke="#ff6347" stroke-width="1.3" fill="none"/>
<path d="M876.4 81.1h2.8M877.8 79.7v2.8" stroke="#6e6e6e" stroke-width="1.3" fill="none"/>
<path d="M773.3 105.3h2.8M774.7 103.9v2.8" stroke="#6e6e6e" stroke-width="1.3" fill="none"/>
<path d="M831.9 173.3h2.8M833.3 171.9v2.8" stroke="#6e6e6e" stroke-width="1.3" fill="none"/>
<path d="M751.9 143.2h2.8M753.3 141.8v2.8" stroke="#6e6e6e" stroke-width="1.3" fill="none"/>
<path d="M890.2 203.3h2.8M891.6 201.9v2.8" stroke="#6e6e6e" stroke-width="1.3" fill="none"/>
<path d="M863 192.2h2.8M864.4 190.8v2.8" stroke="#6e6e6e" stroke-width="1.3" fill="none"/>
<path d="M757.5 218.4h2.8M758.9 217v2.8" stroke="#6e6e6e" stroke-width="1.3" fill="none"/>
<path d="M661.9 147.8h2.8M663.3 146.4v2.8" stroke="#6e6e6e" stroke-width="1.3" fill="none"/>
<path d="M732.6 204.7h2.8M734 203.3v2.8" stroke="#6e6e6e" stroke-width="1.3" fill="none"/>
<path d="M782.8 266.7h2.8M784.2 265.3v2.8" stroke="#6e6e6e" stroke-width="1.3" fill="none"/>
<path d="M816.7 111.3h2.8M818.1 109.9v2.8" stroke="#6e6e6e" stroke-width="1.3" fill="none"/>
<path d="M781.2 244.8h2.8M782.6 243.4v2.8" stroke="#6e6e6e" stroke-width="1.3" fill="none"/>
<path class="c" stroke="rgb(222,20,255)" d="M766.73 223.11 L763.53 223.32 L760.2 223.96 L756.8 225 L753.4 226.43 L750.06 228.23 L746.84 230.34 L743.8 232.75 L741.02 235.39 L738.53 238.23 L736.39 241.21 L734.65 244.29 L733.33 247.4 L732.46 250.51 L732.05 253.56 L732.09 256.51 L732.6 259.3 L733.54 261.9 L734.9 264.27 L736.64 266.37 L738.72 268.17 L741.11 269.64 L743.76 270.76 L746.61 271.52 L749.62 271.9 L752.74 271.9 L755.92 271.52 L759.11 270.76 L762.25 269.64 L765.31 268.17 L768.25 266.37 L771.01 264.27 L773.57 261.9 L775.88 259.3 L777.93 256.51 L779.67 253.56 L781.09 250.51 L782.17 247.4 L782.89 244.29 L783.23 241.21 L783.19 238.23 L782.77 235.39 L781.96 232.75 L780.78 230.34 L779.22 228.23 L777.32 226.43 L775.09 225 L772.55 223.96 L769.75 223.32 L766.73 223.11"/>
<path class="c" stroke="rgb(255,19,0)" d="M752.35 244.86 L749.17 245.07 L745.89 245.69 L742.58 246.72 L739.29 248.13 L736.09 249.89 L733.04 251.98 L730.2 254.36 L727.62 256.98 L725.36 259.8 L723.47 262.76 L721.97 265.83 L720.91 268.95 L720.29 272.06 L720.13 275.12 L720.42 278.08 L721.16 280.9 L722.32 283.52 L723.88 285.91 L725.8 288.03 L728.04 289.86 L730.56 291.35 L733.3 292.49 L736.23 293.26 L739.27 293.65 L742.39 293.65 L745.54 293.26 L748.65 292.49 L751.7 291.35 L754.63 289.86 L757.41 288.03 L759.99 285.91 L762.34 283.52 L764.44 280.9 L766.25 278.08 L767.75 275.12 L768.91 272.06 L769.73 268.95 L770.2 265.83 L770.29 262.76 L770.01 259.8 L769.36 256.98 L768.35 254.36 L766.97 251.98 L765.25 249.89 L763.21 248.13 L760.86 246.72 L758.24 245.69 L755.39 245.07 L752.35 244.86"/>
<path class="c" stroke="rgb(0,215,255)" d="M778.29 71.15 L774.32 71.46 L768.74 72.36 L761.72 73.81 L753.52 75.73"/>
<path class="c" stroke="rgb(0,215,255)" d="M1059.6 78.05 L1065.78 80.68 L1072.94 83.53 L1080.89 86.54 L1089.42 89.63 L1098.38 92.75 L1107.61 95.85 L1116.99 98.88 L1126.39 101.8 L1135.71 104.59 L1144.84 107.2"/>
<path class="c" stroke="rgb(0,215,255)" d="M652.82 109.63 L648.81 111.84 L645.76 113.81 L643.66 115.53 L642.5 116.99 L642.27 118.16 L642.92 119.06 L644.44 119.65 L646.79 119.95 L649.91 119.95 L653.76 119.65 L658.29 119.06 L663.45 118.16 L669.17 116.99 L675.41 115.53 L682.1 113.81 L689.16 111.84 L696.54 109.63 L704.16 107.2 L711.95 104.59 L719.82 101.8 L727.7 98.88 L735.49 95.85 L743.09 92.75 L750.39 89.63 L757.27 86.54 L763.6 83.53 L769.22 80.68 L773.97 78.05 L777.67 75.73 L780.12 73.81 L781.13 72.36 L780.55 71.46 L778.29 71.15"/>
</g>
<text class="t" x="902.65" y="623.54">&#8722;90<tspan font-size="7px" dx="0.8" dy="-6.2">&#8728;</tspan></text>
<text class="t" x="902.65" y="525.86">&#8722;60<tspan font-size="7px" dx="0.8" dy="-6.2">&#8728;</tspan></text>
<text class="t" x="902.65" y="428.18">&#8722;30<tspan font-size="7px" dx="0.8" dy="-6.2">&#8728;</tspan></text>
<text class="t" x="902.65" y="330.5">+0<tspan font-size="7px" dx="0.8" dy="-6.2">&#8728;</tspan></text>
<text class="t" x="902.65" y="220.32">+30<tspan font-size="7px" dx="0.8" dy="-6.2">&#8728;</tspan></text>
<text class="t" x="902.65" y="122.64">+60<tspan font-size="7px" dx="0.8" dy="-6.2">&#8728;</tspan></text>
<text class="t" x="902.65" y="24.96">+90<tspan font-size="7px" dx="0.8" dy="-6.2">&#8728;</tspan></text>
<text class="t" x="902.65" y="330.5">+0<tspan font-size="7px" dx="0.8" dy="-6.2">&#8728;</tspan></text>
<text class="t" x="804.97" y="330.5">+30<tspan font-size="7px" dx="0.8" dy="-6.2">&#8728;</tspan></text>
<text class="t" x="707.29" y="330.5">+60<tspan font-size="7px" dx="0.8" dy="-6.2">&#8728;</tspan></text>
<text class="t" x="609.61" y="330.5">+90<tspan font-size="7px" dx="0.8" dy="-6.2">&#8728;</tspan></text>
<text class="t" x="511.93" y="330.5">+120<tspan font-size="7px" dx="0.8" dy="-6.2">&#8728;</tspan></text>
<text class="t" x="414.25" y="330.5">+150<tspan font-size="7px" dx="0.8" dy="-6.2">&#8728;</tspan></text>
<text class="t" x="316.57" y="330.5">+180<tspan font-size="7px" dx="0.8" dy="-6.2">&#8728;</tspan></text>
<text class="t" x="1488.73" y="330.5">+180<tspan font-size="7px" dx="0.8" dy="-6.2">&#8728;</tspan></text>
<text class="t" x="1391.05" y="330.5">+210<tspan font-size="7px" dx="0.8" dy="-6.2">&#8728;</tspan></text>
<text class="t" x="1293.37" y="330.5">+240<tspan font-size="7px" dx="0.8" dy="-6.2">&#8728;</tspan></text>
<text class="t" x="1195.69" y="330.5">+270<tspan font-size="7px" dx="0.8" dy="-6.2">&#8728;</tspan></text>
<text class="t" x="1098.01" y="330.5">+300<tspan font-size="7px" dx="0.8" dy="-6.2">&#8728;</tspan></text>
<text class="t" x="1000.33" y="330.5">+330<tspan font-size="7px" dx="0.8" dy="-6.2">&#8728;</tspan></text>
<text class="s" x="757.71" y="251.07">NTA</text>
<text class="s" x="745.24" y="272.82">STA</text>
<text class="s" x="712.5" y="97.74">SLD</text>
<text class="m" x="315.77" y="29.7">UK00AL</text>
<text class="m" x="315.77" y="42.9">Beg: 20251102 17:46:07 (sol = 220.21°)</text>
<text class="m" x="315.77" y="56.7">End: 20251102 23:31:03 (sol = 220.45°)</text>
<text class="m" x="315.17" y="69.6">--------------------------------------</text>
<text class="m" x="315.17" y="81.7">...: 12</text>
<text class="m" x="315.77" y="94.7">STA: 4</text>
<text class="m" x="315.77" y="108">NTA: 2</text>
<text class="m" x="315.77" y="121.3">SLD: 1</text>
<g clip-path="url(#cb)">
<text class="mo" transform="translate(149.25 643.4) rotate(-90)">APR</text>
<text class="mo" transform="translate(295.5 645.5) rotate(-90)">MAY</text>
<text class="mo" transform="translate(436.75 640.3) rotate(-90)">JUN</text>
<text class="mo" transform="translate(577.5 642.7) rotate(-90)">JUL</text>
<text class="mo" transform="translate(724.5 642) rotate(-90)">AUG</text>
<text class="mo" transform="translate(872 643.1) rotate(-90)">SEP</text>
<text class="mo" transform="translate(1017 644) rotate(-90)">OCT</text>
<text class="mo" transform="translate(1170 644.8) rotate(-90)">NOV</text>
<text class="mo" transform="translate(1319.7 643.3) rotate(-90)">DEC</text>
<text class="mo" transform="translate(1469.4 639.5) rotate(-90)">JAN</text>
<text class="mo" transform="translate(1628.9 645.1) rotate(-90)">FEB</text>
<text class="mo" transform="translate(1766.4 645.2) rotate(-90)">MAR</text>
<path class="bar" stroke="rgb(238,141,240)" d="M108.04 834H127.65M166.87 834H343.35M367.86 834H622.77M637.48 834H784.54M809.05 834H897.29M921.8 834H970.83M985.53 834H1063.97M1083.58 834H1201.23M1245.35 834H1323.79M1338.49 834H1353.2M1382.61 834H1441.44M1461.05 834H1510.07M1524.78 834H1544.38M1725.77 834H1745.37M1760.08 834H1779.69"/>
<path class="bar" stroke="rgb(207,24,255)" d="M166.87 818H186.47M225.69 818H284.52M313.93 818H338.44M367.86 818H490.41M510.02 818H652.18M706.11 818H735.52M774.74 818H843.37M872.78 818H985.53M1005.14 818H1014.95M1063.97 818H1211.03M1245.35 818H1264.96M1294.37 818H1313.98M1343.39 818H1363M1387.51 818H1426.73M1461.05 818H1480.66M1549.29 818H1568.9"/>
<path class="bar" stroke="rgb(255,19,0)" d="M166.87 802H186.47M260.01 802H485.51M510.02 802H612.97M627.67 802H715.91M730.62 802H823.76M951.22 802H1147.31M1162.01 802H1245.35M1260.06 802H1441.44M1461.05 802H1480.66M1554.19 802H1573.8"/>
<path class="bar" stroke="rgb(255,178,13)" d="M196.28 785H215.89M323.74 785H505.12M519.82 785H539.43M559.04 785H681.6M809.05 785H828.66M956.12 785H970.83M990.44 785H1122.79M1157.11 785H1215.94M1245.35 785H1264.96M1318.88 785H1338.49M1397.32 785H1416.93M1465.95 785H1647.33"/>
<path class="bar" stroke="rgb(255,240,0)" d="M343.35 769H367.86M411.98 769H446.29M470.8 769H490.41M529.63 769H544.34M563.94 769H588.46M617.87 769H647.28M961.02 769H985.53M1063.97 769H1083.58M1103.19 769H1122.79M1162.01 769H1191.43M1250.25 769H1269.86M1426.73 769H1510.07"/>
<path class="bar" stroke="rgb(164,255,40)" d="M421.78 752H441.39M534.53 752H554.14M568.85 752H588.46M622.77 752H740.42M970.83 752H1132.6M1186.52 752H1343.39M1470.85 752H1490.46"/>
<path class="bar" stroke="rgb(89,210,0)" d="M431.58 736H451.19M578.65 736H730.62M995.34 736H1103.19M1117.89 736H1220.84M1264.96 736H1289.47M1490.46 736H1510.07"/>
<path class="bar" stroke="rgb(0,250,136)" d="M593.36 720H612.97M657.09 720H769.84M1073.77 720H1240.45M1264.96 720H1284.57"/>
<path class="bar" stroke="rgb(0,215,255)" d="M598.26 703H730.62M1093.38 703H1117.89M1201.23 703H1220.84M1274.76 703H1323.79"/>
<path class="bar" stroke="rgb(0,27,172)" d="M1112.99 687H1132.6"/>
<path d="M1100.48 842.5V641.4" stroke="#f00" stroke-width="1.389" stroke-dasharray="5.139 2.222" fill="none"/>
<path d="M1101.48 842.5V641.4" stroke="#f00" stroke-width="1.389" stroke-dasharray="5.139 2.222" fill="none"/>
<path class="ml" d="M75 842.5V641.4"/>
<path class="ml" d="M219 842.5V641.4"/>
<path class="ml" d="M365 842.5V641.4"/>
<path class="ml" d="M506 842.5V641.4"/>
<path class="ml" d="M651 842.5V641.4"/>
<path class="ml" d="M797 842.5V641.4"/>
<path class="ml" d="M940 842.5V641.4"/>
<path class="ml" d="M1091 842.5V641.4"/>
<path class="ml" d="M1239 842.5V641.4"/>
<path class="ml" d="M1394 842.5V641.4"/>
<path class="ml" d="M1548 842.5V641.4"/>
<path class="ml" d="M1687 842.5V641.4"/>
</g>
<text class="b" x="116.97" y="831.5">KSE</text>
<text class="b" x="254.86" y="831.5">ETA</text>
<text class="b" x="495.32" y="831.5">NZC</text>
<text class="b" x="710.77" y="831.5">NDA</text>
<text class="b" x="853.77" y="831.5">SPE</text>
<text class="b" x="946.33" y="831.5">ARD</text>
<text class="b" x="1024.98" y="831.5">EGE</text>
<text class="b" x="1142.46" y="831.5">NTA</text>
<text class="b" x="1284.76" y="831.5">MON</text>
<text class="b" x="1343.35" y="831.5">URS</text>
<text class="b" x="1411.85" y="831.5">AHY</text>
<text class="b" x="1485.8" y="831.5">GUM</text>
<text class="b" x="1535.33" y="831.5">OHY</text>
<text class="b" x="1735.97" y="831.5">XHE</text>
<text class="b" x="1769.29" y="831.5">EVI</text>
<text class="b" x="176.61" y="815.5">AVB</text>
<text class="b" x="254.86" y="815.5">ELY</text>
<text class="b" x="323.96" y="815.5">CAM</text>
<text class="b" x="432.03" y="815.5">SSG</text>
<text class="b" x="578.63" y="815.5">PCA</text>
<text class="b" x="720.78" y="815.5">AUD</text>
<text class="b" x="809.34" y="815.5">AUR</text>
<text class="b" x="930.77" y="815.5">DSX</text>
<text class="b" x="1011.07" y="815.5">OCU</text>
<text class="b" x="1138.56" y="815.5">OER</text>
<text class="b" x="1254.84" y="815.5">DKD</text>
<text class="b" x="1304.27" y="815.5">DSV</text>
<text class="b" x="1353.11" y="815.5">ALY</text>
<text class="b" x="1407.84" y="815.5">JLE</text>
<text class="b" x="1471.59" y="815.5">SCC</text>
<text class="b" x="1558.85" y="815.5">FEV</text>
<text class="b" x="176.31" y="799.5">LYR</text>
<text class="b" x="372.84" y="799.5">JMC</text>
<text class="b" x="558.82" y="799.5">JPE</text>
<text class="b" x="671.44" y="799.5">PAU</text>
<text class="b" x="774.26" y="799.5">NIA</text>
<text class="b" x="1050.1" y="799.5">STA</text>
<text class="b" x="1206.35" y="799.5">NOO</text>
<text class="b" x="1353.45" y="799.5">COM</text>
<text class="b" x="1470.29" y="799.5">NCC</text>
<text class="b" x="1564.25" y="799.5">FED</text>
<text class="b" x="206.03" y="782.5">HVI</text>
<text class="b" x="412.02" y="782.5">ARI</text>
<text class="b" x="529.65" y="782.5">SZC</text>
<text class="b" x="618.66" y="782.5">CAP</text>
<text class="b" x="818.34" y="782.5">NUE</text>
<text class="b" x="961.09" y="782.5">OCT</text>
<text class="b" x="1059.45" y="782.5">ORI</text>
<text class="b" x="1186.59" y="782.5">AMO</text>
<text class="b" x="1255.04" y="782.5">DPC</text>
<text class="b" x="1328.79" y="782.5">XVI</text>
<text class="b" x="1407.64" y="782.5">QUA</text>
<text class="b" x="1559.49" y="782.5">AAN</text>
<text class="b" x="352.98" y="766.5">TAH</text>
<text class="b" x="431.43" y="766.5">JEA</text>
<text class="b" x="481.31" y="766.5">JIP</text>
<text class="b" x="538.7" y="766.5">PPS</text>
<text class="b" x="578.63" y="766.5">ZCS</text>
<text class="b" x="632.82" y="766.5">GDR</text>
<text class="b" x="971.1" y="766.5">DRA</text>
<text class="b" x="1073.42" y="766.5">LUM</text>
<text class="b" x="1113.04" y="766.5">RPU</text>
<text class="b" x="1177.29" y="766.5">THA</text>
<text class="b" x="1259.44" y="766.5">PSU</text>
<text class="b" x="1470.53" y="766.5">XCB</text>
<text class="b" x="431.38" y="749.5">JRC</text>
<text class="b" x="544.26" y="749.5">CAN</text>
<text class="b" x="577.98" y="749.5">FAN</text>
<text class="b" x="681.05" y="749.5">PER</text>
<text class="b" x="1049.95" y="749.5">CTA</text>
<text class="b" x="1265.25" y="749.5">HYD</text>
<text class="b" x="1481.09" y="749.5">XUM</text>
<text class="b" x="441.49" y="733.5">COR</text>
<text class="b" x="658.08" y="733.5">SDA</text>
<text class="b" x="1049.3" y="733.5">LMI</text>
<text class="b" x="1166.63" y="733.5">LEO</text>
<text class="b" x="1274.4" y="733.5">EHY</text>
<text class="b" x="1500.51" y="733.5">ECV</text>
<text class="b" x="603.9" y="717.5">JXA</text>
<text class="b" x="716.02" y="717.5">KCG</text>
<text class="b" x="1156.67" y="717.5">AND</text>
<text class="b" x="1274.65" y="717.5">DAD</text>
<text class="b" x="666.29" y="700.5">ERI</text>
<text class="b" x="1108.49" y="700.5">SLD</text>
<text class="b" x="1211.31" y="700.5">ORS</text>
<text class="b" x="1299.97" y="700.5">GEM</text>
<text class="b" x="1122.85" y="684.5">KUM</text>
<path class="pk" d="M113.83 834h8.33M118 829.83v8.33M240.83 834h8.33M245 829.83v8.33M510.43 834h8.33M514.6 829.83v8.33M706.83 834h8.33M711 829.83v8.33M833.83 834h8.33M838 829.83v8.33M961.83 834h8.33M966 829.83v8.33M986.43 834h8.33M990.6 829.83v8.33M1116.83 834h8.33M1121 829.83v8.33M1295.83 834h8.33M1300 829.83v8.33M1341.83 834h8.33M1346 829.83v8.33M1412.83 834h8.33M1417 829.83v8.33M1481.83 834h8.33M1486 829.83v8.33M1530.83 834h8.33M1535 829.83v8.33M1731.83 834h8.33M1736 829.83v8.33M1765.83 834h8.33M1770 829.83v8.33M172.83 818h8.33M177 813.83v8.33M255.43 818h8.33M259.6 813.83v8.33M323.83 818h8.33M328 813.83v8.33M437.83 818h8.33M442 813.83v8.33M598.83 818h8.33M603 813.83v8.33M716.83 818h8.33M721 813.83v8.33M793.83 818h8.33M798 813.83v8.33M939.83 818h8.33M944 813.83v8.33M1005.83 818h8.33M1010 813.83v8.33M1152.83 818h8.33M1157 813.83v8.33M1250.83 818h8.33M1255 813.83v8.33M1299.83 818h8.33M1304 813.83v8.33M1349.43 818h8.33M1353.6 813.83v8.33M1402.83 818h8.33M1407 813.83v8.33M1466.83 818h8.33M1471 813.83v8.33M1554.83 818h8.33M1559 813.83v8.33M174.83 802h8.33M179 797.83v8.33M378.83 802h8.33M383 797.83v8.33M544.83 802h8.33M549 797.83v8.33M682.83 802h8.33M687 797.83v8.33M741.43 802h8.33M745.6 797.83v8.33M1074.83 802h8.33M1079 797.83v8.33M1216.83 802h8.33M1221 797.83v8.33M1304.83 802h8.33M1309 797.83v8.33M1466.83 802h8.33M1471 797.83v8.33M1559.83 802h8.33M1564 797.83v8.33M201.83 785h8.33M206 780.83v8.33M400.83 785h8.33M405 780.83v8.33M525.83 785h8.33M530 780.83v8.33M638.83 785h8.33M643 780.83v8.33M814.83 785h8.33M819 780.83v8.33M959.83 785h8.33M964 780.83v8.33M1040.83 785h8.33M1045 780.83v8.33M1187.83 785h8.33M1192 780.83v8.33M1250.83 785h8.33M1255 780.83v8.33M1324.83 785h8.33M1329 780.83v8.33M1402.83 785h8.33M1407 780.83v8.33M1545.43 785h8.33M1549.6 780.83v8.33M355.83 769h8.33M360 764.83v8.33M426.83 769h8.33M431 764.83v8.33M476.83 769h8.33M481 764.83v8.33M535.43 769h8.33M539.6 764.83v8.33M570.83 769h8.33M575 764.83v8.33M630.83 769h8.33M635 764.83v8.33M973.83 769h8.33M978 764.83v8.33M1069.83 769h8.33M1074 764.83v8.33M1108.83 769h8.33M1113 764.83v8.33M1177.83 769h8.33M1182 764.83v8.33M1255.83 769h8.33M1260 764.83v8.33M1466.83 769h8.33M1471 764.83v8.33M427.83 752h8.33M432 747.83v8.33M539.83 752h8.33M544 747.83v8.33M574.83 752h8.33M579 747.83v8.33M703.83 752h8.33M708 747.83v8.33M1094.83 752h8.33M1099 747.83v8.33M1270.83 752h8.33M1275 747.83v8.33M1476.83 752h8.33M1481 747.83v8.33M437.83 736h8.33M442 731.83v8.33M630.83 736h8.33M635 731.83v8.33M1038.83 736h8.33M1043 731.83v8.33M1167.83 736h8.33M1172 731.83v8.33M1274.83 736h8.33M1279 731.83v8.33M1496.83 736h8.33M1501 731.83v8.33M598.83 720h8.33M603 715.83v8.33M726.83 720h8.33M731 715.83v8.33M1187.83 720h8.33M1192 715.83v8.33M1270.83 720h8.33M1275 715.83v8.33M687.83 703h8.33M692 698.83v8.33M1101.83 703h8.33M1106 698.83v8.33M1206.83 703h8.33M1211 698.83v8.33M1299.83 703h8.33M1304 698.83v8.33M1118.83 687h8.33M1123 682.83v8.33"/>
<rect x="20.4" y="641.4" width="1765.2" height="201.1" fill="none" stroke="#fff" stroke-width="1.111"/>
<text class="k" x="20.4" y="862.2">0</text>
<text class="k" x="265.57" y="862.2">50</text>
<text class="k" x="510.73" y="862.2">100</text>
<text class="k" x="755.9" y="862.2">150</text>
<text class="k" x="1001.07" y="862.2">200</text>
<text class="k" x="1246.23" y="862.2">250</text>
<text class="k" x="1491.4" y="862.2">300</text>
<text class="k" x="1736.57" y="862.2">350</text>
<path d="M20.4 842.5v5.1M265.57 842.5v5.1M510.73 842.5v5.1M755.9 842.5v5.1M1001.07 842.5v5.1M1246.23 842.5v5.1M1491.4 842.5v5.1M1736.57 842.5v5.1" stroke="#fff" stroke-width="1.111" fill="none"/>
<text class="k" x="903" y="881.5">Solar longitude (deg)</text>
</svg></body></html>
